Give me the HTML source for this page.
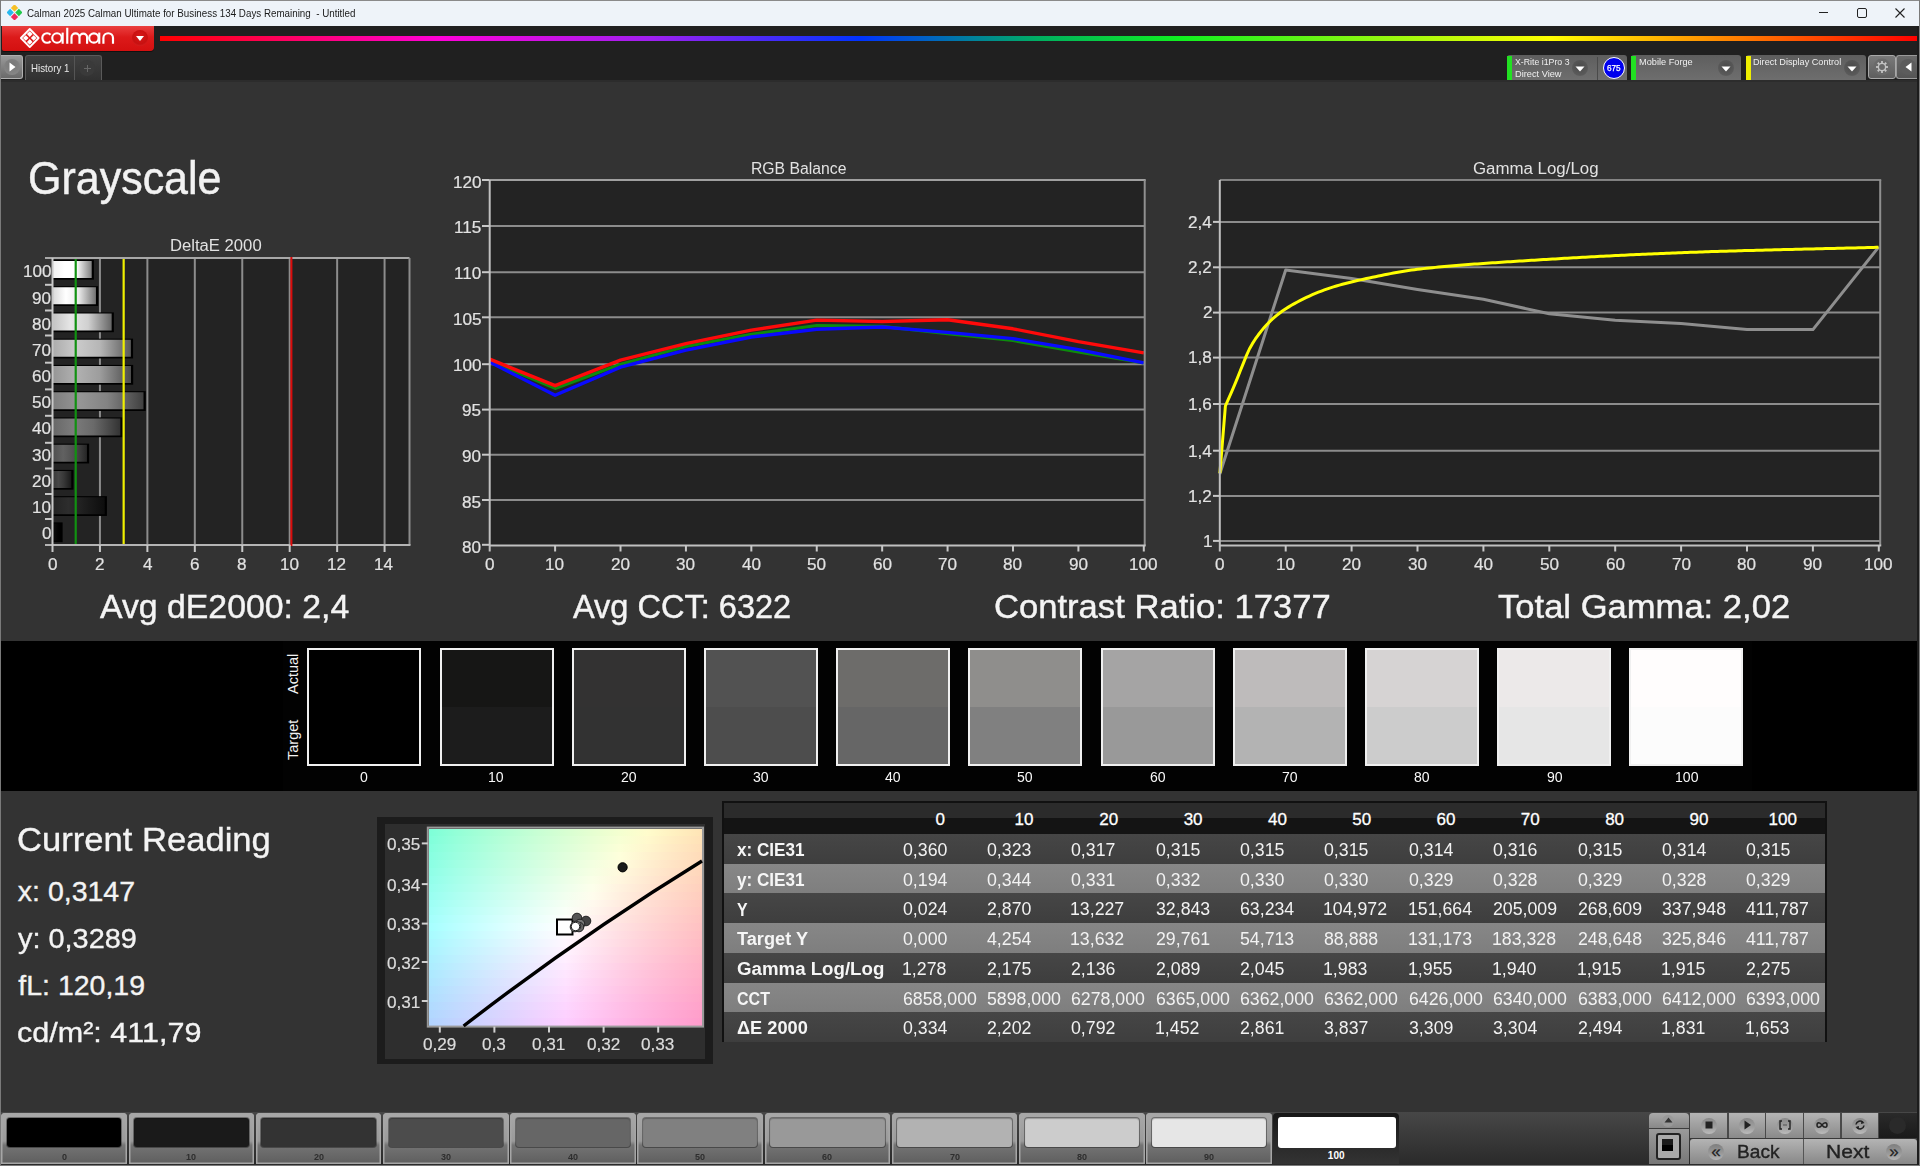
<!DOCTYPE html>
<html><head><meta charset="utf-8"><title>Calman</title>
<style>
html,body{margin:0;padding:0;width:1920px;height:1166px;overflow:hidden;background:#333}
body{position:relative;font-family:"Liberation Sans", sans-serif}
div,svg{box-sizing:content-box}
</style></head><body>
<div style="position:absolute;left:0;top:0;width:1920px;height:1166px;background:#333333"></div>
<div style="position:absolute;left:0;top:0;width:1920px;height:26px;background:#eef3f9;border-top:1px solid #8a8a8a;box-sizing:border-box"></div>
<div style="position:absolute;left:0;top:0;width:1px;height:1166px;background:#7a7a7a;z-index:5"></div>
<div style="position:absolute;left:1917px;top:26px;width:3px;height:1140px;background:#1c1c1c;z-index:5"></div>
<div style="position:absolute;left:1919px;top:0;width:1px;height:1166px;background:#7a7a7a;z-index:6"></div>
<div style="position:absolute;left:0;top:1165px;width:1920px;height:1px;background:#7a7a7a;z-index:6"></div>
<div style="position:absolute;left:1px;top:26px;width:1918px;height:54px;background:#202020"></div>
<svg style="position:absolute;left:7px;top:5px" width="15" height="15" viewBox="0 0 15 15">
<rect x="4.9" y="0.3" width="5.2" height="5.2" fill="#f6c026" transform="rotate(45 7.5 2.9)"/>
<rect x="9.3" y="4.9" width="5.2" height="5.2" fill="#22c94a" transform="rotate(45 11.9 7.5)"/>
<rect x="4.9" y="9.3" width="5.2" height="5.2" fill="#ee2a5e" transform="rotate(45 7.5 11.9)"/>
<rect x="0.5" y="4.9" width="5.2" height="5.2" fill="#27b8ef" transform="rotate(45 3.1 7.5)"/>
</svg>
<div style="position:absolute;left:1819px;top:12px;width:9px;height:1px;background:#222"></div>
<div style="position:absolute;left:1857px;top:8px;width:8px;height:8px;border:1px solid #222;border-radius:2px"></div>
<svg style="position:absolute;left:1895px;top:8px" width="10" height="10" viewBox="0 0 10 10"><path d="M0.5 0.5L9.5 9.5M9.5 0.5L0.5 9.5" stroke="#222" stroke-width="1.1"/></svg>
<div style="position:absolute;left:2px;top:26px;width:152px;height:25px;background:linear-gradient(#ea4040,#dc1a1a 45%,#d41010);border-radius:0 0 4px 2px;box-shadow:0 1px 0 #111"></div>
<svg style="position:absolute;left:0;top:26px" width="160" height="26" viewBox="0 26 160 26">
<g fill="none" stroke="#fff" stroke-width="1.9" stroke-linejoin="round">
<path d="M29.75 29 L38.6 38 L29.75 47.1 L20.9 38 Z"/>
</g>
<g fill="#fff">
<path d="M29.75 31.2 L32.6 34.05 L29.75 36.9 L26.9 34.05 Z"/>
<path d="M25.8 35.15 L28.65 38 L25.8 40.85 L22.95 38 Z"/>
<path d="M33.7 35.15 L36.55 38 L33.7 40.85 L30.85 38 Z"/>
<path d="M29.75 39.1 L32.6 41.95 L29.75 44.8 L26.9 41.95 Z"/>
</g>
<g fill="none" stroke="#fff" stroke-width="2.15">
<path d="M50.53 34.82 A4.75 4.75 0 1 0 50.53 41.18"/>
<circle cx="57.0" cy="38.0" r="4.75"/><path d="M62.65 32.6 V43.75"/>
<path d="M67.25 27.75 V43.75"/>
<path d="M71.5 43.75 V37.4 A4 4 0 0 1 79.5 37.4 V43.75 M79.5 37.4 A3.8 3.8 0 0 1 87.1 37.4 V43.75"/>
<circle cx="93.9" cy="38.0" r="4.7"/><path d="M99.25 32.6 V43.75"/>
<path d="M103.4 43.75 V38.0 A4.8 4.8 0 0 1 113.0 38.0 V43.75"/>
</g></svg>
<div style="position:absolute;left:132px;top:30px;width:16px;height:16px;border-radius:50%;background:radial-gradient(circle at 50% 40%,#d81818,#c81010 60%,#e03030)"></div>
<svg style="position:absolute;left:135px;top:35px" width="10" height="7"><path d="M1 1H9L5 6Z" fill="#fff"/></svg>
<div style="position:absolute;left:160px;top:36.3px;width:1758px;height:4.3px;background:linear-gradient(90deg,#ff0000 0px,#ff00d8 280px,#a020f0 490px,#0033ff 700px,#00b060 880px,#10f020 1020px,#ffff00 1390px,#ff0000 1760px)"></div>
<div style="position:absolute;left:1px;top:55px;width:22px;height:24px;background:linear-gradient(#9a9a9a,#6a6a6a);border:1px solid #b0b0b0;border-left:none;border-radius:0 3px 3px 0;box-sizing:border-box"></div>
<div style="position:absolute;left:4px;top:59px;width:16px;height:16px;border-radius:50%;background:radial-gradient(circle at 50% 35%,#777,#8a8a8a)"></div>
<svg style="position:absolute;left:9px;top:62px" width="7" height="10"><path d="M0.5 0.5L6.5 5L0.5 9.5Z" fill="#fff"/></svg>
<div style="position:absolute;left:25px;top:55px;width:77px;height:26px;background:linear-gradient(#414141,#303030);border:1px solid #5a5a5a;border-bottom:none;border-radius:3px 3px 0 0;box-sizing:border-box"></div>
<div style="position:absolute;left:74px;top:56px;width:1px;height:25px;background:#555"></div>
<div style="position:absolute;left:79px;top:60px;width:16px;height:16px;border-radius:50%;background:#3a3a3a"></div>
<div style="position:absolute;left:84px;top:68px;width:7px;height:1px;background:#666"></div><div style="position:absolute;left:87px;top:65px;width:1px;height:7px;background:#666"></div>
<div style="position:absolute;left:1px;top:80px;width:1916px;height:2px;background:#2c2c2c"></div>
<div style="position:absolute;left:1507px;top:55px;width:120px;height:25px;background:linear-gradient(#5e5e5e,#6e6e6e);border-radius:3px 3px 0 0"></div>
<div style="position:absolute;left:1507px;top:56px;width:5px;height:24px;background:#22e022"></div>
<div style="position:absolute;left:1572px;top:60px;width:16px;height:16px;border-radius:50%;background:radial-gradient(circle at 50% 40%,#4a4a4a,#5a5a5a 70%,#6a6a6a)"></div>
<svg style="position:absolute;left:1575px;top:66px" width="10" height="6"><path d="M0.5 0.5H9.5L5 5.5Z" fill="#fff"/></svg>
<div style="position:absolute;left:1597px;top:57px;width:1px;height:23px;background:#4a4a4a"></div>
<div style="position:absolute;left:1603px;top:56.5px;width:22px;height:22px;border-radius:50%;background:#0000ee;border:1px solid #fff;box-sizing:border-box"></div>
<div style="position:absolute;left:1631px;top:55px;width:110px;height:25px;background:linear-gradient(#5e5e5e,#6e6e6e);border-radius:3px 3px 0 0"></div>
<div style="position:absolute;left:1631px;top:56px;width:5px;height:24px;background:#22e022"></div>
<div style="position:absolute;left:1718px;top:60px;width:16px;height:16px;border-radius:50%;background:radial-gradient(circle at 50% 40%,#4a4a4a,#5a5a5a 70%,#6a6a6a)"></div>
<svg style="position:absolute;left:1721px;top:66px" width="10" height="6"><path d="M0.5 0.5H9.5L5 5.5Z" fill="#fff"/></svg>
<div style="position:absolute;left:1746px;top:55px;width:120px;height:25px;background:linear-gradient(#5e5e5e,#6e6e6e);border-radius:3px 3px 0 0"></div>
<div style="position:absolute;left:1746px;top:56px;width:5px;height:24px;background:#eeee00"></div>
<div style="position:absolute;left:1844px;top:60px;width:16px;height:16px;border-radius:50%;background:radial-gradient(circle at 50% 40%,#4a4a4a,#5a5a5a 70%,#6a6a6a)"></div>
<svg style="position:absolute;left:1847px;top:66px" width="10" height="6"><path d="M0.5 0.5H9.5L5 5.5Z" fill="#fff"/></svg>
<div style="position:absolute;left:1868px;top:55px;width:28px;height:24px;background:linear-gradient(#7a7a7a,#5e5e5e);border:1px solid #a8a8a8;border-radius:3px;box-sizing:border-box"></div>
<svg style="position:absolute;left:1873px;top:58px" width="18" height="18" viewBox="0 0 18 18"><circle cx="9" cy="9" r="8.5" fill="#6a6a6a"/>
<g fill="none" stroke="#c4c4c4" stroke-width="1.3"><circle cx="9" cy="9" r="3.6"/></g><g fill="#c4c4c4"><rect x="8.1" y="3.0" width="1.8" height="2.2" transform="rotate(0 9 9)"/><rect x="8.1" y="3.0" width="1.8" height="2.2" transform="rotate(45 9 9)"/><rect x="8.1" y="3.0" width="1.8" height="2.2" transform="rotate(90 9 9)"/><rect x="8.1" y="3.0" width="1.8" height="2.2" transform="rotate(135 9 9)"/><rect x="8.1" y="3.0" width="1.8" height="2.2" transform="rotate(180 9 9)"/><rect x="8.1" y="3.0" width="1.8" height="2.2" transform="rotate(225 9 9)"/><rect x="8.1" y="3.0" width="1.8" height="2.2" transform="rotate(270 9 9)"/><rect x="8.1" y="3.0" width="1.8" height="2.2" transform="rotate(315 9 9)"/></g><circle cx="9" cy="9" r="1.9" fill="#6a6a6a"/></svg>
<div style="position:absolute;left:1896px;top:55px;width:23px;height:24px;background:linear-gradient(#6a6a6a,#555);border:1px solid #9a9a9a;border-right:none;border-radius:3px 0 0 3px;box-sizing:border-box"></div>
<div style="position:absolute;left:1900px;top:59px;width:16px;height:16px;border-radius:50%;background:#5c5c5c"></div>
<svg style="position:absolute;left:1905px;top:62px" width="7" height="10"><path d="M6.5 0.5L0.5 5L6.5 9.5Z" fill="#fff"/></svg>
<svg style="position:absolute;left:0;top:0" width="440" height="600" viewBox="0 0 440 600"><defs><linearGradient id="bg0" x1="0" x2="1" y1="0" y2="0"><stop offset="0" stop-color="rgb(10,10,10)"/><stop offset="0.3" stop-color="rgb(10,10,10)"/><stop offset="0.6" stop-color="rgb(4,4,4)"/><stop offset="1" stop-color="rgb(0,0,0)"/></linearGradient><linearGradient id="bg1" x1="0" x2="1" y1="0" y2="0"><stop offset="0" stop-color="rgb(35,35,35)"/><stop offset="0.3" stop-color="rgb(45,45,45)"/><stop offset="0.6" stop-color="rgb(30,30,30)"/><stop offset="1" stop-color="rgb(13,13,13)"/></linearGradient><linearGradient id="bg2" x1="0" x2="1" y1="0" y2="0"><stop offset="0" stop-color="rgb(58,58,58)"/><stop offset="0.3" stop-color="rgb(71,71,71)"/><stop offset="0.6" stop-color="rgb(55,55,55)"/><stop offset="1" stop-color="rgb(26,26,26)"/></linearGradient><linearGradient id="bg3" x1="0" x2="1" y1="0" y2="0"><stop offset="0" stop-color="rgb(80,80,80)"/><stop offset="0.3" stop-color="rgb(97,97,97)"/><stop offset="0.6" stop-color="rgb(80,80,80)"/><stop offset="1" stop-color="rgb(38,38,38)"/></linearGradient><linearGradient id="bg4" x1="0" x2="1" y1="0" y2="0"><stop offset="0" stop-color="rgb(104,104,104)"/><stop offset="0.3" stop-color="rgb(124,124,124)"/><stop offset="0.6" stop-color="rgb(106,106,106)"/><stop offset="1" stop-color="rgb(51,51,51)"/></linearGradient><linearGradient id="bg5" x1="0" x2="1" y1="0" y2="0"><stop offset="0" stop-color="rgb(126,126,126)"/><stop offset="0.3" stop-color="rgb(150,150,150)"/><stop offset="0.6" stop-color="rgb(131,131,131)"/><stop offset="1" stop-color="rgb(64,64,64)"/></linearGradient><linearGradient id="bg6" x1="0" x2="1" y1="0" y2="0"><stop offset="0" stop-color="rgb(150,150,150)"/><stop offset="0.3" stop-color="rgb(177,177,177)"/><stop offset="0.6" stop-color="rgb(157,157,157)"/><stop offset="1" stop-color="rgb(76,76,76)"/></linearGradient><linearGradient id="bg7" x1="0" x2="1" y1="0" y2="0"><stop offset="0" stop-color="rgb(172,172,172)"/><stop offset="0.3" stop-color="rgb(203,203,203)"/><stop offset="0.6" stop-color="rgb(182,182,182)"/><stop offset="1" stop-color="rgb(89,89,89)"/></linearGradient><linearGradient id="bg8" x1="0" x2="1" y1="0" y2="0"><stop offset="0" stop-color="rgb(196,196,196)"/><stop offset="0.3" stop-color="rgb(230,230,230)"/><stop offset="0.6" stop-color="rgb(208,208,208)"/><stop offset="1" stop-color="rgb(102,102,102)"/></linearGradient><linearGradient id="bg9" x1="0" x2="1" y1="0" y2="0"><stop offset="0" stop-color="rgb(218,218,218)"/><stop offset="0.3" stop-color="rgb(255,255,255)"/><stop offset="0.6" stop-color="rgb(233,233,233)"/><stop offset="1" stop-color="rgb(114,114,114)"/></linearGradient><linearGradient id="bg10" x1="0" x2="1" y1="0" y2="0"><stop offset="0" stop-color="rgb(242,242,242)"/><stop offset="0.3" stop-color="rgb(255,255,255)"/><stop offset="0.6" stop-color="rgb(255,255,255)"/><stop offset="1" stop-color="rgb(128,128,128)"/></linearGradient></defs><rect x="52.5" y="258.0" width="357.0" height="287.0" fill="#232323"/><line x1="99.94" y1="258.0" x2="99.94" y2="545.0" stroke="#8c8c8c" stroke-width="2"/><line x1="147.38" y1="258.0" x2="147.38" y2="545.0" stroke="#8c8c8c" stroke-width="2"/><line x1="194.82" y1="258.0" x2="194.82" y2="545.0" stroke="#8c8c8c" stroke-width="2"/><line x1="242.26" y1="258.0" x2="242.26" y2="545.0" stroke="#8c8c8c" stroke-width="2"/><line x1="289.7" y1="258.0" x2="289.7" y2="545.0" stroke="#8c8c8c" stroke-width="2"/><line x1="337.14" y1="258.0" x2="337.14" y2="545.0" stroke="#8c8c8c" stroke-width="2"/><line x1="384.58" y1="258.0" x2="384.58" y2="545.0" stroke="#8c8c8c" stroke-width="2"/><rect x="52.5" y="522.40" width="10.12" height="19.8" fill="#000"/><rect x="53.0" y="523.50" width="7.42" height="17" fill="url(#bg0)"/><rect x="52.5" y="496.15" width="54.43" height="19.8" fill="#000"/><rect x="53.0" y="497.25" width="51.73" height="17" fill="url(#bg1)"/><rect x="52.5" y="469.90" width="20.99" height="19.8" fill="#000"/><rect x="53.0" y="471.00" width="18.29" height="17" fill="url(#bg2)"/><rect x="52.5" y="443.65" width="36.64" height="19.8" fill="#000"/><rect x="53.0" y="444.75" width="33.94" height="17" fill="url(#bg3)"/><rect x="52.5" y="417.40" width="70.06" height="19.8" fill="#000"/><rect x="53.0" y="418.50" width="67.36" height="17" fill="url(#bg4)"/><rect x="52.5" y="391.15" width="93.21" height="19.8" fill="#000"/><rect x="53.0" y="392.25" width="90.51" height="17" fill="url(#bg5)"/><rect x="52.5" y="364.90" width="80.69" height="19.8" fill="#000"/><rect x="53.0" y="366.00" width="77.99" height="17" fill="url(#bg6)"/><rect x="52.5" y="338.65" width="80.57" height="19.8" fill="#000"/><rect x="53.0" y="339.75" width="77.87" height="17" fill="url(#bg7)"/><rect x="52.5" y="312.40" width="61.36" height="19.8" fill="#000"/><rect x="53.0" y="313.50" width="58.66" height="17" fill="url(#bg8)"/><rect x="52.5" y="286.15" width="45.63" height="19.8" fill="#000"/><rect x="53.0" y="287.25" width="42.93" height="17" fill="url(#bg9)"/><rect x="52.5" y="259.90" width="41.41" height="19.8" fill="#000"/><rect x="53.0" y="261.00" width="38.71" height="17" fill="url(#bg10)"/><line x1="75.72" y1="258.0" x2="75.72" y2="545.0" stroke="#119111" stroke-width="2.2"/><line x1="123.66" y1="258.0" x2="123.66" y2="545.0" stroke="#f0f000" stroke-width="2.2"/><line x1="45" y1="258.0" x2="409.5" y2="258.0" stroke="#a8a8a8" stroke-width="2"/><line x1="409.5" y1="258.0" x2="409.5" y2="545.0" stroke="#8c8c8c" stroke-width="2"/><line x1="45" y1="545.0" x2="410.5" y2="545.0" stroke="#b4b4b4" stroke-width="2"/><line x1="52.5" y1="258.0" x2="52.5" y2="552.0" stroke="#c8c8c8" stroke-width="2"/><line x1="291.4" y1="257.0" x2="291.4" y2="546.0" stroke="#dc0a0a" stroke-width="2"/><line x1="45" y1="519.00" x2="52.5" y2="519.00" stroke="#c8c8c8" stroke-width="2"/><line x1="45" y1="494.00" x2="52.5" y2="494.00" stroke="#c8c8c8" stroke-width="2"/><line x1="45" y1="468.50" x2="52.5" y2="468.50" stroke="#c8c8c8" stroke-width="2"/><line x1="45" y1="442.80" x2="52.5" y2="442.80" stroke="#c8c8c8" stroke-width="2"/><line x1="45" y1="415.80" x2="52.5" y2="415.80" stroke="#c8c8c8" stroke-width="2"/><line x1="45" y1="389.40" x2="52.5" y2="389.40" stroke="#c8c8c8" stroke-width="2"/><line x1="45" y1="362.70" x2="52.5" y2="362.70" stroke="#c8c8c8" stroke-width="2"/><line x1="45" y1="335.50" x2="52.5" y2="335.50" stroke="#c8c8c8" stroke-width="2"/><line x1="45" y1="310.50" x2="52.5" y2="310.50" stroke="#c8c8c8" stroke-width="2"/><line x1="45" y1="284.80" x2="52.5" y2="284.80" stroke="#c8c8c8" stroke-width="2"/><line x1="99.94" y1="545.0" x2="99.94" y2="552.0" stroke="#c8c8c8" stroke-width="2"/><line x1="147.38" y1="545.0" x2="147.38" y2="552.0" stroke="#c8c8c8" stroke-width="2"/><line x1="194.82" y1="545.0" x2="194.82" y2="552.0" stroke="#c8c8c8" stroke-width="2"/><line x1="242.26" y1="545.0" x2="242.26" y2="552.0" stroke="#c8c8c8" stroke-width="2"/><line x1="289.7" y1="545.0" x2="289.7" y2="552.0" stroke="#c8c8c8" stroke-width="2"/><line x1="337.14" y1="545.0" x2="337.14" y2="552.0" stroke="#c8c8c8" stroke-width="2"/><line x1="384.58" y1="545.0" x2="384.58" y2="552.0" stroke="#c8c8c8" stroke-width="2"/></svg>
<svg style="position:absolute;left:0;top:0" width="1920" height="600" viewBox="0 0 1920 600"><rect x="489.7" y="180.0" width="655.0" height="365.5" fill="#232323"/><line x1="489.7" y1="500.00" x2="1144.7" y2="500.00" stroke="#8c8c8c" stroke-width="2"/><line x1="489.7" y1="454.70" x2="1144.7" y2="454.70" stroke="#8c8c8c" stroke-width="2"/><line x1="489.7" y1="409.60" x2="1144.7" y2="409.60" stroke="#8c8c8c" stroke-width="2"/><line x1="489.7" y1="364.20" x2="1144.7" y2="364.20" stroke="#8c8c8c" stroke-width="2"/><line x1="489.7" y1="317.30" x2="1144.7" y2="317.30" stroke="#8c8c8c" stroke-width="2"/><line x1="489.7" y1="272.20" x2="1144.7" y2="272.20" stroke="#8c8c8c" stroke-width="2"/><line x1="489.7" y1="226.00" x2="1144.7" y2="226.00" stroke="#8c8c8c" stroke-width="2"/><polyline points="489.70,360.80 555.11,388.40 620.52,364.20 685.93,346.50 751.34,334.30 816.75,325.50 882.16,326.40 947.57,333.70 1012.98,340.50 1078.39,352.00 1143.80,363.00" fill="none" stroke="#0d8a0d" stroke-width="3.2" stroke-linejoin="round"/><polyline points="489.70,362.00 555.11,395.20 620.52,367.10 685.93,350.10 751.34,337.00 816.75,329.20 882.16,327.00 947.57,332.40 1012.98,338.60 1078.39,349.60 1143.80,362.90" fill="none" stroke="#0a0aff" stroke-width="3.4" stroke-linejoin="round"/><polyline points="489.70,359.20 555.11,385.70 620.52,360.20 685.93,343.70 751.34,330.10 816.75,320.10 882.16,321.50 947.57,319.70 1012.98,328.80 1078.39,341.60 1143.80,352.90" fill="none" stroke="#ff0a0a" stroke-width="3.4" stroke-linejoin="round"/><line x1="489.7" y1="180.0" x2="1145.7" y2="180.0" stroke="#a0a0a0" stroke-width="2"/><line x1="1144.7" y1="180.0" x2="1144.7" y2="545.5" stroke="#909090" stroke-width="2"/><line x1="489.7" y1="545.5" x2="1145.7" y2="545.5" stroke="#c0c0c0" stroke-width="2"/><line x1="489.7" y1="180.0" x2="489.7" y2="551.5" stroke="#c0c0c0" stroke-width="2"/><line x1="482" y1="544.80" x2="489.7" y2="544.80" stroke="#c8c8c8" stroke-width="2"/><line x1="482" y1="500.00" x2="489.7" y2="500.00" stroke="#c8c8c8" stroke-width="2"/><line x1="482" y1="454.70" x2="489.7" y2="454.70" stroke="#c8c8c8" stroke-width="2"/><line x1="482" y1="409.60" x2="489.7" y2="409.60" stroke="#c8c8c8" stroke-width="2"/><line x1="482" y1="364.20" x2="489.7" y2="364.20" stroke="#c8c8c8" stroke-width="2"/><line x1="482" y1="317.30" x2="489.7" y2="317.30" stroke="#c8c8c8" stroke-width="2"/><line x1="482" y1="272.20" x2="489.7" y2="272.20" stroke="#c8c8c8" stroke-width="2"/><line x1="482" y1="226.00" x2="489.7" y2="226.00" stroke="#c8c8c8" stroke-width="2"/><line x1="482" y1="180.00" x2="489.7" y2="180.00" stroke="#c8c8c8" stroke-width="2"/><line x1="555.11" y1="545.5" x2="555.11" y2="551.5" stroke="#c8c8c8" stroke-width="2"/><line x1="620.52" y1="545.5" x2="620.52" y2="551.5" stroke="#c8c8c8" stroke-width="2"/><line x1="685.93" y1="545.5" x2="685.93" y2="551.5" stroke="#c8c8c8" stroke-width="2"/><line x1="751.34" y1="545.5" x2="751.34" y2="551.5" stroke="#c8c8c8" stroke-width="2"/><line x1="816.75" y1="545.5" x2="816.75" y2="551.5" stroke="#c8c8c8" stroke-width="2"/><line x1="882.16" y1="545.5" x2="882.16" y2="551.5" stroke="#c8c8c8" stroke-width="2"/><line x1="947.57" y1="545.5" x2="947.57" y2="551.5" stroke="#c8c8c8" stroke-width="2"/><line x1="1012.98" y1="545.5" x2="1012.98" y2="551.5" stroke="#c8c8c8" stroke-width="2"/><line x1="1078.39" y1="545.5" x2="1078.39" y2="551.5" stroke="#c8c8c8" stroke-width="2"/><line x1="1143.80" y1="545.5" x2="1143.80" y2="551.5" stroke="#c8c8c8" stroke-width="2"/><rect x="1219.8" y="180.0" width="660.4000000000001" height="365.5" fill="#232323"/><line x1="1219.8" y1="540.90" x2="1880.2" y2="540.90" stroke="#8c8c8c" stroke-width="2"/><line x1="1219.8" y1="495.90" x2="1880.2" y2="495.90" stroke="#8c8c8c" stroke-width="2"/><line x1="1219.8" y1="450.70" x2="1880.2" y2="450.70" stroke="#8c8c8c" stroke-width="2"/><line x1="1219.8" y1="404.00" x2="1880.2" y2="404.00" stroke="#8c8c8c" stroke-width="2"/><line x1="1219.8" y1="357.60" x2="1880.2" y2="357.60" stroke="#8c8c8c" stroke-width="2"/><line x1="1219.8" y1="312.60" x2="1880.2" y2="312.60" stroke="#8c8c8c" stroke-width="2"/><line x1="1219.8" y1="267.30" x2="1880.2" y2="267.30" stroke="#8c8c8c" stroke-width="2"/><line x1="1219.8" y1="221.90" x2="1880.2" y2="221.90" stroke="#8c8c8c" stroke-width="2"/><polyline points="1219.80,474.00 1285.70,270.00 1351.60,278.60 1417.50,289.40 1483.40,299.20 1549.30,313.80 1615.20,320.30 1681.10,323.40 1747.00,329.60 1812.90,329.60 1878.80,246.90" fill="none" stroke="#8e8e8e" stroke-width="3" stroke-linejoin="round"/><polyline points="1219.9,473.1 1225.40,406.00 1228.40,399.16 1231.40,392.34 1234.40,385.39 1237.40,378.14 1240.40,370.56 1243.40,363.08 1246.40,355.67 1249.40,348.99 1252.40,343.68 1255.40,338.99 1258.40,334.77 1261.40,330.87 1264.40,327.26 1267.40,323.95 1270.40,320.95 1273.40,318.21 1276.40,315.65 1279.40,313.27 1282.40,311.07 1285.40,309.04 1288.40,307.14 1291.40,305.32 1294.40,303.59 1297.40,301.94 1300.40,300.36 1303.40,298.85 1306.40,297.41 1309.40,296.03 1312.40,294.71 1315.40,293.44 1318.40,292.21 1321.40,291.03 1324.40,289.91 1327.40,288.84 1330.40,287.83 1333.40,286.87 1336.40,285.98 1339.40,285.12 1342.40,284.29 1345.40,283.50 1348.40,282.73 1351.40,281.99 1354.40,281.27 1357.40,280.57 1360.40,279.89 1363.40,279.23 1366.40,278.58 1369.40,277.94 1372.40,277.32 1375.40,276.69 1378.40,276.07 1381.40,275.45 1384.40,274.83 1387.40,274.23 1390.40,273.63 1393.40,273.06 1396.40,272.50 1399.40,271.96 1402.40,271.44 1405.40,270.95 1408.40,270.49 1411.40,270.06 1414.40,269.67 1417.40,269.31 1420.40,268.97 1423.40,268.63 1426.40,268.30 1429.40,267.98 1432.40,267.68 1435.40,267.38 1438.40,267.08 1441.40,266.80 1444.40,266.52 1447.40,266.25 1450.40,265.99 1453.40,265.74 1456.40,265.49 1459.40,265.24 1462.40,265.00 1465.40,264.77 1468.40,264.54 1471.40,264.32 1474.40,264.10 1477.40,263.88 1480.40,263.67 1483.40,263.46 1486.40,263.26 1489.40,263.05 1492.40,262.85 1495.40,262.65 1498.40,262.46 1501.40,262.26 1504.40,262.06 1507.40,261.87 1510.40,261.67 1513.40,261.48 1516.40,261.29 1519.40,261.10 1522.40,260.90 1525.40,260.71 1528.40,260.53 1531.40,260.34 1534.40,260.15 1537.40,259.97 1540.40,259.78 1543.40,259.60 1546.40,259.42 1549.40,259.24 1552.40,259.06 1555.40,258.88 1558.40,258.71 1561.40,258.53 1564.40,258.36 1567.40,258.18 1570.40,258.01 1573.40,257.84 1576.40,257.67 1579.40,257.51 1582.40,257.34 1585.40,257.17 1588.40,257.01 1591.40,256.85 1594.40,256.69 1597.40,256.53 1600.40,256.37 1603.40,256.21 1606.40,256.06 1609.40,255.91 1612.40,255.75 1615.40,255.60 1618.40,255.45 1621.40,255.31 1624.40,255.16 1627.40,255.01 1630.40,254.87 1633.40,254.73 1636.40,254.59 1639.40,254.45 1642.40,254.31 1645.40,254.18 1648.40,254.04 1651.40,253.91 1654.40,253.78 1657.40,253.65 1660.40,253.52 1663.40,253.40 1666.40,253.27 1669.40,253.15 1672.40,253.03 1675.40,252.91 1678.40,252.79 1681.40,252.68 1684.40,252.56 1687.40,252.45 1690.40,252.34 1693.40,252.23 1696.40,252.13 1699.40,252.02 1702.40,251.92 1705.40,251.82 1708.40,251.72 1711.40,251.62 1714.40,251.52 1717.40,251.42 1720.40,251.33 1723.40,251.24 1726.40,251.15 1729.40,251.06 1732.40,250.97 1735.40,250.88 1738.40,250.79 1741.40,250.71 1744.40,250.62 1747.40,250.54 1750.40,250.46 1753.40,250.38 1756.40,250.30 1759.40,250.22 1762.40,250.14 1765.40,250.06 1768.40,249.98 1771.40,249.91 1774.40,249.83 1777.40,249.76 1780.40,249.68 1783.40,249.61 1786.40,249.53 1789.40,249.46 1792.40,249.39 1795.40,249.32 1798.40,249.24 1801.40,249.17 1804.40,249.10 1807.40,249.03 1810.40,248.96 1813.40,248.89 1816.40,248.82 1819.40,248.75 1822.40,248.68 1825.40,248.61 1828.40,248.54 1831.40,248.46 1834.40,248.39 1837.40,248.32 1840.40,248.25 1843.40,248.18 1846.40,248.11 1849.40,248.03 1852.40,247.96 1855.40,247.89 1858.40,247.81 1861.40,247.74 1864.40,247.66 1867.40,247.59 1870.40,247.51 1873.40,247.43 1876.40,247.36 1878.50,247.30" fill="none" stroke="#ffff00" stroke-width="3" stroke-linejoin="round"/><line x1="1219.8" y1="180.0" x2="1881.2" y2="180.0" stroke="#a0a0a0" stroke-width="1.5"/><line x1="1880.2" y1="180.0" x2="1880.2" y2="545.5" stroke="#909090" stroke-width="2"/><line x1="1219.8" y1="545.5" x2="1881.2" y2="545.5" stroke="#c0c0c0" stroke-width="2"/><line x1="1219.8" y1="180.0" x2="1219.8" y2="551.5" stroke="#c0c0c0" stroke-width="2"/><line x1="1213" y1="540.90" x2="1219.8" y2="540.90" stroke="#c8c8c8" stroke-width="2"/><line x1="1213" y1="495.90" x2="1219.8" y2="495.90" stroke="#c8c8c8" stroke-width="2"/><line x1="1213" y1="450.70" x2="1219.8" y2="450.70" stroke="#c8c8c8" stroke-width="2"/><line x1="1213" y1="404.00" x2="1219.8" y2="404.00" stroke="#c8c8c8" stroke-width="2"/><line x1="1213" y1="357.60" x2="1219.8" y2="357.60" stroke="#c8c8c8" stroke-width="2"/><line x1="1213" y1="312.60" x2="1219.8" y2="312.60" stroke="#c8c8c8" stroke-width="2"/><line x1="1213" y1="267.30" x2="1219.8" y2="267.30" stroke="#c8c8c8" stroke-width="2"/><line x1="1213" y1="221.90" x2="1219.8" y2="221.90" stroke="#c8c8c8" stroke-width="2"/><line x1="1285.70" y1="545.5" x2="1285.70" y2="551.5" stroke="#c8c8c8" stroke-width="2"/><line x1="1351.60" y1="545.5" x2="1351.60" y2="551.5" stroke="#c8c8c8" stroke-width="2"/><line x1="1417.50" y1="545.5" x2="1417.50" y2="551.5" stroke="#c8c8c8" stroke-width="2"/><line x1="1483.40" y1="545.5" x2="1483.40" y2="551.5" stroke="#c8c8c8" stroke-width="2"/><line x1="1549.30" y1="545.5" x2="1549.30" y2="551.5" stroke="#c8c8c8" stroke-width="2"/><line x1="1615.20" y1="545.5" x2="1615.20" y2="551.5" stroke="#c8c8c8" stroke-width="2"/><line x1="1681.10" y1="545.5" x2="1681.10" y2="551.5" stroke="#c8c8c8" stroke-width="2"/><line x1="1747.00" y1="545.5" x2="1747.00" y2="551.5" stroke="#c8c8c8" stroke-width="2"/><line x1="1812.90" y1="545.5" x2="1812.90" y2="551.5" stroke="#c8c8c8" stroke-width="2"/><line x1="1878.80" y1="545.5" x2="1878.80" y2="551.5" stroke="#c8c8c8" stroke-width="2"/></svg>
<div style="position:absolute;left:1px;top:641px;width:1916px;height:150px;background:#000"></div>
<div style="position:absolute;left:283px;top:641px;width:1469px;height:150px;background:#020202"></div>
<div style="position:absolute;left:307.3px;top:647.5px;width:110px;height:114px;border:2px solid #f0f0f0;background:linear-gradient(#000000 50%,#000000 50%)"></div>
<div style="position:absolute;left:439.5px;top:647.5px;width:110px;height:114px;border:2px solid #f0f0f0;background:linear-gradient(#161615 50%,#1c1c1c 50%)"></div>
<div style="position:absolute;left:571.7px;top:647.5px;width:110px;height:114px;border:2px solid #f0f0f0;background:linear-gradient(#333232 50%,#323232 50%)"></div>
<div style="position:absolute;left:703.9px;top:647.5px;width:110px;height:114px;border:2px solid #f0f0f0;background:linear-gradient(#525252 50%,#4d4d4d 50%)"></div>
<div style="position:absolute;left:836.1px;top:647.5px;width:110px;height:114px;border:2px solid #f0f0f0;background:linear-gradient(#6d6c6a 50%,#666666 50%)"></div>
<div style="position:absolute;left:968.3px;top:647.5px;width:110px;height:114px;border:2px solid #f0f0f0;background:linear-gradient(#8f8e8c 50%,#808080 50%)"></div>
<div style="position:absolute;left:1100.5px;top:647.5px;width:110px;height:114px;border:2px solid #f0f0f0;background:linear-gradient(#a5a4a4 50%,#999999 50%)"></div>
<div style="position:absolute;left:1232.7px;top:647.5px;width:110px;height:114px;border:2px solid #f0f0f0;background:linear-gradient(#bebbbb 50%,#b3b3b3 50%)"></div>
<div style="position:absolute;left:1364.9px;top:647.5px;width:110px;height:114px;border:2px solid #f0f0f0;background:linear-gradient(#d6d3d3 50%,#cccccc 50%)"></div>
<div style="position:absolute;left:1497.1px;top:647.5px;width:110px;height:114px;border:2px solid #f0f0f0;background:linear-gradient(#ece9e9 50%,#e6e6e6 50%)"></div>
<div style="position:absolute;left:1629.3px;top:647.5px;width:110px;height:114px;border:2px solid #f0f0f0;background:linear-gradient(#fffdfd 50%,#fcfcfc 50%)"></div>
<div style="position:absolute;left:286px;top:653px;width:40px;height:41px;"><div style="position:absolute;left:0;top:41px;width:41px;font-size:14.5px;line-height:14px;color:#f2f2f2;transform:rotate(-90deg);transform-origin:0 0;white-space:pre">Actual</div></div>
<div style="position:absolute;left:286px;top:719px;width:40px;height:41px;"><div style="position:absolute;left:0;top:41px;width:41px;font-size:14.5px;line-height:14px;color:#f2f2f2;transform:rotate(-90deg);transform-origin:0 0;white-space:pre">Target</div></div>
<div style="position:absolute;left:377px;top:817px;width:336px;height:247px;background:#1c1c1c"></div>
<div style="position:absolute;left:385px;top:824px;width:320px;height:235px;background:#2e2e2e"></div>
<div style="position:absolute;left:428.8px;top:828.6px;width:273.2px;height:197.0px;overflow:hidden;filter:blur(0px)"><div style="position:absolute;left:0;top:0.00px;width:273.2px;height:8.48px;background:linear-gradient(90deg,#7dffd8 0%,#93ffd7 10%,#a6ffd6 20%,#b7ffd5 30%,#c8ffd4 40%,#d7ffd2 50%,#e6ffd1 60%,#f4ffd0 70%,#fffccc 80%,#fff0c0 90%,#ffe4b6 100%)"></div><div style="position:absolute;left:0;top:7.88px;width:273.2px;height:8.48px;background:linear-gradient(90deg,#80ffdb 0%,#96ffda 10%,#a9ffd9 20%,#bbffd8 30%,#cbffd7 40%,#daffd6 50%,#e9ffd5 60%,#f7ffd4 70%,#fff9cd 80%,#ffecc1 90%,#ffe1b7 100%)"></div><div style="position:absolute;left:0;top:15.76px;width:273.2px;height:8.48px;background:linear-gradient(90deg,#84ffde 0%,#99ffdd 10%,#acffdc 20%,#beffdb 30%,#ceffda 40%,#ddffd9 50%,#ecffd8 60%,#fbffd7 70%,#fff6ce 80%,#ffe9c3 90%,#ffdeb8 100%)"></div><div style="position:absolute;left:0;top:23.64px;width:273.2px;height:8.48px;background:linear-gradient(90deg,#87ffe1 0%,#9cffe0 10%,#afffdf 20%,#c1ffdf 30%,#d1ffde 40%,#e1ffdd 50%,#efffdc 60%,#feffdb 70%,#fff2cf 80%,#ffe6c4 90%,#ffdbb9 100%)"></div><div style="position:absolute;left:0;top:31.52px;width:273.2px;height:8.48px;background:linear-gradient(90deg,#8affe4 0%,#a0ffe3 10%,#b2ffe3 20%,#c4ffe2 30%,#d4ffe1 40%,#e4ffe0 50%,#f3ffe0 60%,#fffddd 70%,#ffefd0 80%,#ffe3c4 90%,#ffd8ba 100%)"></div><div style="position:absolute;left:0;top:39.40px;width:273.2px;height:8.48px;background:linear-gradient(90deg,#8effe7 0%,#a3ffe7 10%,#b6ffe6 20%,#c7ffe5 30%,#d7ffe5 40%,#e7ffe4 50%,#f6ffe3 60%,#fff9dd 70%,#ffecd1 80%,#ffe0c5 90%,#ffd6bb 100%)"></div><div style="position:absolute;left:0;top:47.28px;width:273.2px;height:8.48px;background:linear-gradient(90deg,#91ffeb 0%,#a6ffea 10%,#b9ffea 20%,#caffe9 30%,#dbffe8 40%,#ebffe8 50%,#faffe7 60%,#fff6de 70%,#ffe9d2 80%,#ffddc6 90%,#ffd3bc 100%)"></div><div style="position:absolute;left:0;top:55.16px;width:273.2px;height:8.48px;background:linear-gradient(90deg,#95ffee 0%,#a9ffed 10%,#bcffed 20%,#ceffed 30%,#deffec 40%,#eeffec 50%,#fdffeb 60%,#fff2df 70%,#ffe6d2 80%,#ffdac7 90%,#ffd0bd 100%)"></div><div style="position:absolute;left:0;top:63.04px;width:273.2px;height:8.48px;background:linear-gradient(90deg,#98fff1 0%,#adfff1 10%,#c0fff1 20%,#d1fff0 30%,#e2fff0 40%,#f2ffef 50%,#fffded 60%,#ffefdf 70%,#ffe2d3 80%,#ffd7c8 90%,#ffcdbe 100%)"></div><div style="position:absolute;left:0;top:70.92px;width:273.2px;height:8.48px;background:linear-gradient(90deg,#9cfff5 0%,#b0fff4 10%,#c3fff4 20%,#d4fff4 30%,#e5fff4 40%,#f5fff3 50%,#fff9ee 60%,#ffece0 70%,#ffdfd4 80%,#ffd4c9 90%,#ffcabf 100%)"></div><div style="position:absolute;left:0;top:78.80px;width:273.2px;height:8.48px;background:linear-gradient(90deg,#9ffff8 0%,#b4fff8 10%,#c6fff8 20%,#d8fff8 30%,#e9fff7 40%,#f9fff7 50%,#fff6ee 60%,#ffe8e1 70%,#ffdcd5 80%,#ffd1ca 90%,#ffc7c0 100%)"></div><div style="position:absolute;left:0;top:86.68px;width:273.2px;height:8.48px;background:linear-gradient(90deg,#a3fffc 0%,#b7fffc 10%,#cafffc 20%,#dcfffc 30%,#ecfffb 40%,#fdfffb 50%,#fff2ef 60%,#ffe5e1 70%,#ffd9d5 80%,#ffcecb 90%,#ffc4c1 100%)"></div><div style="position:absolute;left:0;top:94.56px;width:273.2px;height:8.48px;background:linear-gradient(90deg,#a6ffff 0%,#baffff 10%,#cdffff 20%,#dfffff 30%,#f0feff 40%,#fffefe 50%,#ffefef 60%,#ffe1e2 70%,#ffd6d6 80%,#ffcbcb 90%,#ffc1c2 100%)"></div><div style="position:absolute;left:0;top:102.44px;width:273.2px;height:8.48px;background:linear-gradient(90deg,#a7fbff 0%,#bbfbff 10%,#cefbff 20%,#dffbff 30%,#f0faff 40%,#fffafe 50%,#ffebf0 60%,#ffdee3 70%,#ffd2d7 80%,#ffc8cc 90%,#ffbec3 100%)"></div><div style="position:absolute;left:0;top:110.32px;width:273.2px;height:8.48px;background:linear-gradient(90deg,#a8f7ff 0%,#bcf7ff 10%,#cef7ff 20%,#dff7ff 30%,#eff6ff 40%,#fff6ff 50%,#ffe7f0 60%,#ffdbe3 70%,#ffcfd8 80%,#ffc5cd 90%,#ffbbc3 100%)"></div><div style="position:absolute;left:0;top:118.20px;width:273.2px;height:8.48px;background:linear-gradient(90deg,#a9f4ff 0%,#bdf4ff 10%,#cef3ff 20%,#dff3ff 30%,#eff2ff 40%,#fff2ff 50%,#ffe4f1 60%,#ffd7e4 70%,#ffccd8 80%,#ffc2ce 90%,#ffb8c4 100%)"></div><div style="position:absolute;left:0;top:126.08px;width:273.2px;height:8.48px;background:linear-gradient(90deg,#aaf0ff 0%,#bdf0ff 10%,#cfefff 20%,#dfefff 30%,#efeeff 40%,#ffeeff 50%,#ffe0f1 60%,#ffd4e4 70%,#ffc9d9 80%,#ffbecf 90%,#ffb5c5 100%)"></div><div style="position:absolute;left:0;top:133.96px;width:273.2px;height:8.48px;background:linear-gradient(90deg,#abedff 0%,#beecff 10%,#cfecff 20%,#e0ebff 30%,#efeaff 40%,#feeaff 50%,#ffddf1 60%,#ffd0e5 70%,#ffc5d9 80%,#ffbbcf 90%,#ffb2c6 100%)"></div><div style="position:absolute;left:0;top:141.84px;width:273.2px;height:8.48px;background:linear-gradient(90deg,#ace9ff 0%,#bfe9ff 10%,#d0e8ff 20%,#e0e7ff 30%,#efe7ff 40%,#fee6ff 50%,#ffd9f2 60%,#ffcde5 70%,#ffc2da 80%,#ffb8d0 90%,#ffafc7 100%)"></div><div style="position:absolute;left:0;top:149.72px;width:273.2px;height:8.48px;background:linear-gradient(90deg,#ade6ff 0%,#bfe5ff 10%,#d0e4ff 20%,#e0e3ff 30%,#efe3ff 40%,#fee2ff 50%,#ffd5f2 60%,#ffcae6 70%,#ffbfdb 80%,#ffb5d1 90%,#ffacc7 100%)"></div><div style="position:absolute;left:0;top:157.60px;width:273.2px;height:8.48px;background:linear-gradient(90deg,#aee2ff 0%,#c0e1ff 10%,#d0e1ff 20%,#e0e0ff 30%,#efdfff 40%,#fedeff 50%,#ffd2f3 60%,#ffc6e6 70%,#ffbcdb 80%,#ffb2d1 90%,#ffa9c8 100%)"></div><div style="position:absolute;left:0;top:165.48px;width:273.2px;height:8.48px;background:linear-gradient(90deg,#afdfff 0%,#c0deff 10%,#d1ddff 20%,#e0dcff 30%,#efdbff 40%,#fddaff 50%,#ffcef3 60%,#ffc3e7 70%,#ffb8dc 80%,#ffafd2 90%,#ffa6c9 100%)"></div><div style="position:absolute;left:0;top:173.36px;width:273.2px;height:8.48px;background:linear-gradient(90deg,#b0dbff 0%,#c1daff 10%,#d1d9ff 20%,#e0d8ff 30%,#efd7ff 40%,#fdd6ff 50%,#ffcbf3 60%,#ffbfe7 70%,#ffb5dd 80%,#ffabd3 90%,#ffa3ca 100%)"></div><div style="position:absolute;left:0;top:181.24px;width:273.2px;height:8.48px;background:linear-gradient(90deg,#b1d8ff 0%,#c1d7ff 10%,#d1d6ff 20%,#e0d4ff 30%,#efd3ff 40%,#fdd2ff 50%,#ffc7f4 60%,#ffbce8 70%,#ffb2dd 80%,#ffa8d3 90%,#ff9fca 100%)"></div><div style="position:absolute;left:0;top:189.12px;width:273.2px;height:8.48px;background:linear-gradient(90deg,#b1d4ff 0%,#c2d3ff 10%,#d2d2ff 20%,#e0d1ff 30%,#efcfff 40%,#fdceff 50%,#ffc3f4 60%,#ffb8e8 70%,#ffaede 80%,#ffa5d4 90%,#ff9ccb 100%)"></div></div>
<svg style="position:absolute;left:0;top:0" width="720" height="1070" viewBox="0 0 720 1070"><rect x="427.8" y="827.6" width="275.2" height="198.9999999999999" fill="none" stroke="#9a9a9a" stroke-width="2"/><path d="M463.6 1026 Q 580 936 702 861" fill="none" stroke="#000" stroke-width="3.4"/><circle cx="622.6" cy="867.3" r="4.6" fill="#1a1a1a" stroke="#000" stroke-width="1"/><rect x="557" y="919.5" width="15.5" height="15" fill="#fff" stroke="#000" stroke-width="2"/><circle cx="577" cy="918" r="4.8" fill="#555" stroke="#222" stroke-width="1"/><circle cx="586" cy="921" r="4.8" fill="#444" stroke="#222" stroke-width="1"/><circle cx="580" cy="924" r="4.8" fill="#777" stroke="#222" stroke-width="1"/><circle cx="575" cy="927" r="4.8" fill="#999" stroke="#222" stroke-width="1"/><circle cx="579" cy="927" r="4.8" fill="#666" stroke="#222" stroke-width="1"/><circle cx="576" cy="926" r="4.8" fill="#bbb" stroke="#222" stroke-width="1"/><circle cx="575.5" cy="926.5" r="4.2" fill="#fff" stroke="#222" stroke-width="1"/><line x1="439.80" y1="1026.6" x2="439.80" y2="1032.6" stroke="#d0d0d0" stroke-width="2"/><line x1="494.40" y1="1026.6" x2="494.40" y2="1032.6" stroke="#d0d0d0" stroke-width="2"/><line x1="549.00" y1="1026.6" x2="549.00" y2="1032.6" stroke="#d0d0d0" stroke-width="2"/><line x1="603.60" y1="1026.6" x2="603.60" y2="1032.6" stroke="#d0d0d0" stroke-width="2"/><line x1="658.20" y1="1026.6" x2="658.20" y2="1032.6" stroke="#d0d0d0" stroke-width="2"/><line x1="421.8" y1="1001.00" x2="427.8" y2="1001.00" stroke="#d0d0d0" stroke-width="2"/><line x1="421.8" y1="962.00" x2="427.8" y2="962.00" stroke="#d0d0d0" stroke-width="2"/><line x1="421.8" y1="923.60" x2="427.8" y2="923.60" stroke="#d0d0d0" stroke-width="2"/><line x1="421.8" y1="884.10" x2="427.8" y2="884.10" stroke="#d0d0d0" stroke-width="2"/><line x1="421.8" y1="843.40" x2="427.8" y2="843.40" stroke="#d0d0d0" stroke-width="2"/></svg>
<div style="position:absolute;left:722px;top:801px;width:1105px;height:241px;background:#111"></div>
<div style="position:absolute;left:724px;top:803px;width:1101px;height:15px;background:#2b2b2b"></div>
<div style="position:absolute;left:724px;top:818px;width:1101px;height:16px;background:#141414"></div>
<div style="position:absolute;left:724px;top:834.0px;width:1101px;height:30.0px;background:linear-gradient(#464646,#3e3e3e)"></div>
<div style="position:absolute;left:724px;top:863.7px;width:1101px;height:30.0px;background:linear-gradient(#878787,#7e7e7e)"></div>
<div style="position:absolute;left:724px;top:893.4px;width:1101px;height:30.0px;background:linear-gradient(#464646,#3e3e3e)"></div>
<div style="position:absolute;left:724px;top:923.1px;width:1101px;height:30.0px;background:linear-gradient(#878787,#7e7e7e)"></div>
<div style="position:absolute;left:724px;top:952.8px;width:1101px;height:30.0px;background:linear-gradient(#464646,#3e3e3e)"></div>
<div style="position:absolute;left:724px;top:982.5px;width:1101px;height:30.0px;background:linear-gradient(#878787,#7e7e7e)"></div>
<div style="position:absolute;left:724px;top:1012.2px;width:1101px;height:30.0px;background:linear-gradient(#464646,#3e3e3e)"></div>
<div style="position:absolute;left:1px;top:1112px;width:1916px;height:53px;background:linear-gradient(#474747,#2a2a2a)"></div>
<div style="position:absolute;left:1.4px;top:1113px;width:125.5px;height:51px;background:linear-gradient(#a8a8a8,#9a9a9a 55%,#747474 63%,#5e5e5e);border-radius:4px 4px 0 0;box-shadow:inset 0 0 0 1.5px #a6a6a6"></div>
<div style="position:absolute;left:6.9px;top:1117.5px;width:114.5px;height:29.5px;background:rgb(0,0,0);border-radius:3px;box-shadow:0 0 0 1px rgba(0,0,0,0.35),inset 0 1px 1px rgba(0,0,0,0.25)"></div>
<div style="position:absolute;left:128.6px;top:1113px;width:125.5px;height:51px;background:linear-gradient(#a8a8a8,#9a9a9a 55%,#747474 63%,#5e5e5e);border-radius:4px 4px 0 0;box-shadow:inset 0 0 0 1.5px #a6a6a6"></div>
<div style="position:absolute;left:134.1px;top:1117.5px;width:114.5px;height:29.5px;background:rgb(26,26,26);border-radius:3px;box-shadow:0 0 0 1px rgba(0,0,0,0.35),inset 0 1px 1px rgba(0,0,0,0.25)"></div>
<div style="position:absolute;left:255.8px;top:1113px;width:125.5px;height:51px;background:linear-gradient(#a8a8a8,#9a9a9a 55%,#747474 63%,#5e5e5e);border-radius:4px 4px 0 0;box-shadow:inset 0 0 0 1.5px #a6a6a6"></div>
<div style="position:absolute;left:261.3px;top:1117.5px;width:114.5px;height:29.5px;background:rgb(51,51,51);border-radius:3px;box-shadow:0 0 0 1px rgba(0,0,0,0.35),inset 0 1px 1px rgba(0,0,0,0.25)"></div>
<div style="position:absolute;left:383.0px;top:1113px;width:125.5px;height:51px;background:linear-gradient(#a8a8a8,#9a9a9a 55%,#747474 63%,#5e5e5e);border-radius:4px 4px 0 0;box-shadow:inset 0 0 0 1.5px #a6a6a6"></div>
<div style="position:absolute;left:388.5px;top:1117.5px;width:114.5px;height:29.5px;background:rgb(76,76,76);border-radius:3px;box-shadow:0 0 0 1px rgba(0,0,0,0.35),inset 0 1px 1px rgba(0,0,0,0.25)"></div>
<div style="position:absolute;left:510.2px;top:1113px;width:125.5px;height:51px;background:linear-gradient(#a8a8a8,#9a9a9a 55%,#747474 63%,#5e5e5e);border-radius:4px 4px 0 0;box-shadow:inset 0 0 0 1.5px #a6a6a6"></div>
<div style="position:absolute;left:515.7px;top:1117.5px;width:114.5px;height:29.5px;background:rgb(102,102,102);border-radius:3px;box-shadow:0 0 0 1px rgba(0,0,0,0.35),inset 0 1px 1px rgba(0,0,0,0.25)"></div>
<div style="position:absolute;left:637.4px;top:1113px;width:125.5px;height:51px;background:linear-gradient(#a8a8a8,#9a9a9a 55%,#747474 63%,#5e5e5e);border-radius:4px 4px 0 0;box-shadow:inset 0 0 0 1.5px #a6a6a6"></div>
<div style="position:absolute;left:642.9px;top:1117.5px;width:114.5px;height:29.5px;background:rgb(128,128,128);border-radius:3px;box-shadow:0 0 0 1px rgba(0,0,0,0.35),inset 0 1px 1px rgba(0,0,0,0.25)"></div>
<div style="position:absolute;left:764.6px;top:1113px;width:125.5px;height:51px;background:linear-gradient(#a8a8a8,#9a9a9a 55%,#747474 63%,#5e5e5e);border-radius:4px 4px 0 0;box-shadow:inset 0 0 0 1.5px #a6a6a6"></div>
<div style="position:absolute;left:770.1px;top:1117.5px;width:114.5px;height:29.5px;background:rgb(153,153,153);border-radius:3px;box-shadow:0 0 0 1px rgba(0,0,0,0.35),inset 0 1px 1px rgba(0,0,0,0.25)"></div>
<div style="position:absolute;left:891.8px;top:1113px;width:125.5px;height:51px;background:linear-gradient(#a8a8a8,#9a9a9a 55%,#747474 63%,#5e5e5e);border-radius:4px 4px 0 0;box-shadow:inset 0 0 0 1.5px #a6a6a6"></div>
<div style="position:absolute;left:897.3px;top:1117.5px;width:114.5px;height:29.5px;background:rgb(178,178,178);border-radius:3px;box-shadow:0 0 0 1px rgba(0,0,0,0.35),inset 0 1px 1px rgba(0,0,0,0.25)"></div>
<div style="position:absolute;left:1019.0px;top:1113px;width:125.5px;height:51px;background:linear-gradient(#a8a8a8,#9a9a9a 55%,#747474 63%,#5e5e5e);border-radius:4px 4px 0 0;box-shadow:inset 0 0 0 1.5px #a6a6a6"></div>
<div style="position:absolute;left:1024.5px;top:1117.5px;width:114.5px;height:29.5px;background:rgb(204,204,204);border-radius:3px;box-shadow:0 0 0 1px rgba(0,0,0,0.35),inset 0 1px 1px rgba(0,0,0,0.25)"></div>
<div style="position:absolute;left:1146.2px;top:1113px;width:125.5px;height:51px;background:linear-gradient(#a8a8a8,#9a9a9a 55%,#747474 63%,#5e5e5e);border-radius:4px 4px 0 0;box-shadow:inset 0 0 0 1.5px #a6a6a6"></div>
<div style="position:absolute;left:1151.7px;top:1117.5px;width:114.5px;height:29.5px;background:rgb(230,230,230);border-radius:3px;box-shadow:0 0 0 1px rgba(0,0,0,0.35),inset 0 1px 1px rgba(0,0,0,0.25)"></div>
<div style="position:absolute;left:1273.4px;top:1113px;width:125.5px;height:51px;background:linear-gradient(#161616,#262626 50%,#333);border-radius:4px 4px 0 0"></div>
<div style="position:absolute;left:1278.4px;top:1117px;width:117.5px;height:31px;background:#fff;border-radius:3px"></div>
<div style="position:absolute;left:1649px;top:1113px;width:40px;height:15px;background:linear-gradient(#aaa,#888);border-radius:4px 4px 0 0"></div>
<div style="position:absolute;left:1662px;top:1115px;width:12px;height:12px;border-radius:50%;background:#999"></div>
<svg style="position:absolute;left:1664px;top:1117px" width="9" height="6"><path d="M0.5 5.5L4.5 0.5L8.5 5.5Z" fill="#333"/></svg>
<div style="position:absolute;left:1649px;top:1129px;width:40px;height:35px;background:linear-gradient(#9a9a9a,#777)"></div>
<div style="position:absolute;left:1656px;top:1133px;width:21px;height:23px;border:2px solid #222;border-radius:3px;background:#aaa"></div>
<div style="position:absolute;left:1662px;top:1139px;width:11px;height:12px;background:linear-gradient(#1a1a1a 50%,#000 50%)"></div>
<div style="position:absolute;left:1690.3px;top:1113px;width:37.7px;height:25px;background:linear-gradient(#b4b4b4,#8a8a8a)"></div>
<div style="position:absolute;left:1727.3px;top:1113px;width:1.3px;height:25px;background:#4a4a4a;z-index:1"></div>
<div style="position:absolute;left:1701.3px;top:1117.5px;width:16px;height:16px;border-radius:50%;background:linear-gradient(#888,#a0a0a0 60%,#bcbcbc)"></div>
<div style="position:absolute;left:1728.0px;top:1113px;width:37.7px;height:25px;background:linear-gradient(#b4b4b4,#8a8a8a)"></div>
<div style="position:absolute;left:1765.0px;top:1113px;width:1.3px;height:25px;background:#4a4a4a;z-index:1"></div>
<div style="position:absolute;left:1739.0px;top:1117.5px;width:16px;height:16px;border-radius:50%;background:linear-gradient(#888,#a0a0a0 60%,#bcbcbc)"></div>
<div style="position:absolute;left:1765.7px;top:1113px;width:37.7px;height:25px;background:linear-gradient(#b4b4b4,#8a8a8a)"></div>
<div style="position:absolute;left:1802.7px;top:1113px;width:1.3px;height:25px;background:#4a4a4a;z-index:1"></div>
<div style="position:absolute;left:1776.7px;top:1117.5px;width:16px;height:16px;border-radius:50%;background:linear-gradient(#888,#a0a0a0 60%,#bcbcbc)"></div>
<div style="position:absolute;left:1803.4px;top:1113px;width:37.7px;height:25px;background:linear-gradient(#b4b4b4,#8a8a8a)"></div>
<div style="position:absolute;left:1840.4px;top:1113px;width:1.3px;height:25px;background:#4a4a4a;z-index:1"></div>
<div style="position:absolute;left:1814.4px;top:1117.5px;width:16px;height:16px;border-radius:50%;background:linear-gradient(#888,#a0a0a0 60%,#bcbcbc)"></div>
<div style="position:absolute;left:1841.1px;top:1113px;width:37.7px;height:25px;background:linear-gradient(#b4b4b4,#8a8a8a)"></div>
<div style="position:absolute;left:1878.1px;top:1113px;width:1.3px;height:25px;background:#4a4a4a;z-index:1"></div>
<div style="position:absolute;left:1852.1px;top:1117.5px;width:16px;height:16px;border-radius:50%;background:linear-gradient(#888,#a0a0a0 60%,#bcbcbc)"></div>
<svg style="position:absolute;left:1701.3px;top:1117px" width="16" height="16" viewBox="-8 -8 16 16"><rect x="-3.5" y="-3.5" width="7" height="7" fill="#222"/></svg>
<svg style="position:absolute;left:1739.0px;top:1117px" width="16" height="16" viewBox="-8 -8 16 16"><path d="M-2.5 -4.5L4 0L-2.5 4.5Z" fill="#222"/></svg>
<svg style="position:absolute;left:1776.7px;top:1117px" width="16" height="16" viewBox="-8 -8 16 16"><path d="M-3 -4H-5V4H-3M3 -4H5V4H3" fill="none" stroke="#222" stroke-width="1.4"/><rect x="-1.5" y="-0.6" width="1" height="1.2" fill="#222"/><rect x="0.5" y="-0.6" width="1" height="1.2" fill="#222"/></svg>
<svg style="position:absolute;left:1814.4px;top:1117px" width="16" height="16" viewBox="-8 -8 16 16"><path d="M0 0C-2 -3 -5 -3 -5 0C-5 3 -2 3 0 0C2 -3 5 -3 5 0C5 3 2 3 0 0Z" fill="none" stroke="#222" stroke-width="1.5"/></svg>
<svg style="position:absolute;left:1852.1px;top:1117px" width="16" height="16" viewBox="-8 -8 16 16"><path d="M-4 -0.5A4 4 0 0 1 3 -2.5M4 0.5A4 4 0 0 1 -3 2.5" fill="none" stroke="#222" stroke-width="1.6"/><path d="M1.5 -4.5L4.5 -2L1 -1Z M-1.5 4.5L-4.5 2L-1 1Z" fill="#222"/></svg>
<div style="position:absolute;left:1879px;top:1113px;width:38px;height:25px;background:linear-gradient(#2a2a2a,#1a1a1a)"></div>
<div style="position:absolute;left:1889px;top:1117px;width:17px;height:17px;border-radius:50%;background:#2a2a2a"></div>
<div style="position:absolute;left:1690px;top:1139px;width:114px;height:25px;background:linear-gradient(#b4b4b4,#888);border-radius:3px 0 0 0;border-right:1px solid #555;box-sizing:border-box"></div>
<div style="position:absolute;left:1804px;top:1139px;width:113px;height:25px;background:linear-gradient(#b4b4b4,#888);border-radius:0 3px 0 0"></div>
<div style="position:absolute;left:1707.8px;top:1143.5px;width:16px;height:16px;border-radius:50%;background:linear-gradient(#7e7e7e,#9a9a9a 60%,#b4b4b4)"></div>
<div style="position:absolute;left:1885.8px;top:1143.5px;width:16px;height:16px;border-radius:50%;background:linear-gradient(#7e7e7e,#9a9a9a 60%,#b4b4b4)"></div>
<div style="position:absolute;left:26.60px;top:8.06px;font-size:10.8px;line-height:10.8px;color:#1a1a1a;transform:scaleX(0.9075);transform-origin:0 0;white-space:pre;">Calman 2025 Calman Ultimate for Business 134 Days Remaining  - Untitled</div>
<div style="position:absolute;left:30.50px;top:62.71px;font-size:10.5px;line-height:10.5px;color:#e8e8e8;transform:scaleX(0.9258);transform-origin:0 0;white-space:pre;">History 1</div>
<div style="position:absolute;left:1607.38px;top:63.72px;font-size:8.6px;line-height:8.6px;color:#fff;transform:scaleX(0.9500);transform-origin:0 0;white-space:pre;-webkit-text-stroke:0.25px #fff;">675</div>
<div style="position:absolute;left:1514.60px;top:57.34px;font-size:9.4px;line-height:9.4px;color:#f0f0f0;transform:scaleX(0.9339);transform-origin:0 0;white-space:pre;">X-Rite i1Pro 3</div>
<div style="position:absolute;left:1514.60px;top:68.64px;font-size:9.4px;line-height:9.4px;color:#f0f0f0;transform:scaleX(0.9839);transform-origin:0 0;white-space:pre;">Direct View</div>
<div style="position:absolute;left:1639.00px;top:57.34px;font-size:9.4px;line-height:9.4px;color:#f0f0f0;transform:scaleX(0.9817);transform-origin:0 0;white-space:pre;">Mobile Forge</div>
<div style="position:absolute;left:1753.10px;top:57.34px;font-size:9.4px;line-height:9.4px;color:#f0f0f0;transform:scaleX(0.9727);transform-origin:0 0;white-space:pre;">Direct Display Control</div>
<div style="position:absolute;left:28.25px;top:155.14px;font-size:46.5px;line-height:46.5px;color:#f2f2f2;transform:scaleX(0.9243);transform-origin:0 0;white-space:pre;-webkit-text-stroke:0.5px #f2f2f2;">Grayscale</div>
<div style="position:absolute;left:170.16px;top:238.26px;font-size:16px;line-height:16px;color:#e2e2e2;transform:scaleX(1.0406);transform-origin:0 0;white-space:pre;">DeltaE 2000</div>
<div style="position:absolute;left:41.77px;top:526.06px;font-size:16px;line-height:16px;color:#e2e2e2;transform:scaleX(1.0700);transform-origin:0 0;white-space:pre;-webkit-text-stroke:0.2px #e2e2e2;">0</div>
<div style="position:absolute;left:32.25px;top:499.90px;font-size:16px;line-height:16px;color:#e2e2e2;transform:scaleX(1.0700);transform-origin:0 0;white-space:pre;-webkit-text-stroke:0.2px #e2e2e2;">10</div>
<div style="position:absolute;left:32.25px;top:473.74px;font-size:16px;line-height:16px;color:#e2e2e2;transform:scaleX(1.0700);transform-origin:0 0;white-space:pre;-webkit-text-stroke:0.2px #e2e2e2;">20</div>
<div style="position:absolute;left:32.25px;top:447.58px;font-size:16px;line-height:16px;color:#e2e2e2;transform:scaleX(1.0700);transform-origin:0 0;white-space:pre;-webkit-text-stroke:0.2px #e2e2e2;">30</div>
<div style="position:absolute;left:32.25px;top:421.42px;font-size:16px;line-height:16px;color:#e2e2e2;transform:scaleX(1.0700);transform-origin:0 0;white-space:pre;-webkit-text-stroke:0.2px #e2e2e2;">40</div>
<div style="position:absolute;left:32.25px;top:395.26px;font-size:16px;line-height:16px;color:#e2e2e2;transform:scaleX(1.0700);transform-origin:0 0;white-space:pre;-webkit-text-stroke:0.2px #e2e2e2;">50</div>
<div style="position:absolute;left:32.25px;top:369.10px;font-size:16px;line-height:16px;color:#e2e2e2;transform:scaleX(1.0700);transform-origin:0 0;white-space:pre;-webkit-text-stroke:0.2px #e2e2e2;">60</div>
<div style="position:absolute;left:32.25px;top:342.94px;font-size:16px;line-height:16px;color:#e2e2e2;transform:scaleX(1.0700);transform-origin:0 0;white-space:pre;-webkit-text-stroke:0.2px #e2e2e2;">70</div>
<div style="position:absolute;left:32.25px;top:316.78px;font-size:16px;line-height:16px;color:#e2e2e2;transform:scaleX(1.0700);transform-origin:0 0;white-space:pre;-webkit-text-stroke:0.2px #e2e2e2;">80</div>
<div style="position:absolute;left:32.25px;top:290.62px;font-size:16px;line-height:16px;color:#e2e2e2;transform:scaleX(1.0700);transform-origin:0 0;white-space:pre;-webkit-text-stroke:0.2px #e2e2e2;">90</div>
<div style="position:absolute;left:22.73px;top:264.46px;font-size:16px;line-height:16px;color:#e2e2e2;transform:scaleX(1.0700);transform-origin:0 0;white-space:pre;-webkit-text-stroke:0.2px #e2e2e2;">100</div>
<div style="position:absolute;left:47.69px;top:557.46px;font-size:16px;line-height:16px;color:#e2e2e2;transform:scaleX(1.0700);transform-origin:0 0;white-space:pre;-webkit-text-stroke:0.2px #e2e2e2;">0</div>
<div style="position:absolute;left:95.12px;top:557.46px;font-size:16px;line-height:16px;color:#e2e2e2;transform:scaleX(1.0700);transform-origin:0 0;white-space:pre;-webkit-text-stroke:0.2px #e2e2e2;">2</div>
<div style="position:absolute;left:142.56px;top:557.46px;font-size:16px;line-height:16px;color:#e2e2e2;transform:scaleX(1.0700);transform-origin:0 0;white-space:pre;-webkit-text-stroke:0.2px #e2e2e2;">4</div>
<div style="position:absolute;left:190.00px;top:557.46px;font-size:16px;line-height:16px;color:#e2e2e2;transform:scaleX(1.0700);transform-origin:0 0;white-space:pre;-webkit-text-stroke:0.2px #e2e2e2;">6</div>
<div style="position:absolute;left:237.44px;top:557.46px;font-size:16px;line-height:16px;color:#e2e2e2;transform:scaleX(1.0700);transform-origin:0 0;white-space:pre;-webkit-text-stroke:0.2px #e2e2e2;">8</div>
<div style="position:absolute;left:279.59px;top:557.46px;font-size:16px;line-height:16px;color:#e2e2e2;transform:scaleX(1.0700);transform-origin:0 0;white-space:pre;-webkit-text-stroke:0.2px #e2e2e2;">10</div>
<div style="position:absolute;left:327.03px;top:557.46px;font-size:16px;line-height:16px;color:#e2e2e2;transform:scaleX(1.0700);transform-origin:0 0;white-space:pre;-webkit-text-stroke:0.2px #e2e2e2;">12</div>
<div style="position:absolute;left:374.47px;top:557.46px;font-size:16px;line-height:16px;color:#e2e2e2;transform:scaleX(1.0700);transform-origin:0 0;white-space:pre;-webkit-text-stroke:0.2px #e2e2e2;">14</div>
<div style="position:absolute;left:751.22px;top:160.66px;font-size:16px;line-height:16px;color:#e2e2e2;transform:scaleX(0.9840);transform-origin:0 0;white-space:pre;">RGB Balance</div>
<div style="position:absolute;left:452.83px;top:174.76px;font-size:16px;line-height:16px;color:#e2e2e2;transform:scaleX(1.0700);transform-origin:0 0;white-space:pre;-webkit-text-stroke:0.2px #e2e2e2;">120</div>
<div style="position:absolute;left:454.10px;top:220.46px;font-size:16px;line-height:16px;color:#e2e2e2;transform:scaleX(1.0700);transform-origin:0 0;white-space:pre;-webkit-text-stroke:0.2px #e2e2e2;">115</div>
<div style="position:absolute;left:454.10px;top:266.16px;font-size:16px;line-height:16px;color:#e2e2e2;transform:scaleX(1.0700);transform-origin:0 0;white-space:pre;-webkit-text-stroke:0.2px #e2e2e2;">110</div>
<div style="position:absolute;left:452.83px;top:311.86px;font-size:16px;line-height:16px;color:#e2e2e2;transform:scaleX(1.0700);transform-origin:0 0;white-space:pre;-webkit-text-stroke:0.2px #e2e2e2;">105</div>
<div style="position:absolute;left:452.83px;top:357.56px;font-size:16px;line-height:16px;color:#e2e2e2;transform:scaleX(1.0700);transform-origin:0 0;white-space:pre;-webkit-text-stroke:0.2px #e2e2e2;">100</div>
<div style="position:absolute;left:462.35px;top:403.26px;font-size:16px;line-height:16px;color:#e2e2e2;transform:scaleX(1.0700);transform-origin:0 0;white-space:pre;-webkit-text-stroke:0.2px #e2e2e2;">95</div>
<div style="position:absolute;left:462.35px;top:448.96px;font-size:16px;line-height:16px;color:#e2e2e2;transform:scaleX(1.0700);transform-origin:0 0;white-space:pre;-webkit-text-stroke:0.2px #e2e2e2;">90</div>
<div style="position:absolute;left:462.35px;top:494.66px;font-size:16px;line-height:16px;color:#e2e2e2;transform:scaleX(1.0700);transform-origin:0 0;white-space:pre;-webkit-text-stroke:0.2px #e2e2e2;">85</div>
<div style="position:absolute;left:462.35px;top:540.36px;font-size:16px;line-height:16px;color:#e2e2e2;transform:scaleX(1.0700);transform-origin:0 0;white-space:pre;-webkit-text-stroke:0.2px #e2e2e2;">80</div>
<div style="position:absolute;left:484.88px;top:557.46px;font-size:16px;line-height:16px;color:#e2e2e2;transform:scaleX(1.0700);transform-origin:0 0;white-space:pre;-webkit-text-stroke:0.2px #e2e2e2;">0</div>
<div style="position:absolute;left:545.00px;top:557.46px;font-size:16px;line-height:16px;color:#e2e2e2;transform:scaleX(1.0700);transform-origin:0 0;white-space:pre;-webkit-text-stroke:0.2px #e2e2e2;">10</div>
<div style="position:absolute;left:610.94px;top:557.46px;font-size:16px;line-height:16px;color:#e2e2e2;transform:scaleX(1.0700);transform-origin:0 0;white-space:pre;-webkit-text-stroke:0.2px #e2e2e2;">20</div>
<div style="position:absolute;left:676.35px;top:557.46px;font-size:16px;line-height:16px;color:#e2e2e2;transform:scaleX(1.0700);transform-origin:0 0;white-space:pre;-webkit-text-stroke:0.2px #e2e2e2;">30</div>
<div style="position:absolute;left:741.76px;top:557.46px;font-size:16px;line-height:16px;color:#e2e2e2;transform:scaleX(1.0700);transform-origin:0 0;white-space:pre;-webkit-text-stroke:0.2px #e2e2e2;">40</div>
<div style="position:absolute;left:807.17px;top:557.46px;font-size:16px;line-height:16px;color:#e2e2e2;transform:scaleX(1.0700);transform-origin:0 0;white-space:pre;-webkit-text-stroke:0.2px #e2e2e2;">50</div>
<div style="position:absolute;left:872.58px;top:557.46px;font-size:16px;line-height:16px;color:#e2e2e2;transform:scaleX(1.0700);transform-origin:0 0;white-space:pre;-webkit-text-stroke:0.2px #e2e2e2;">60</div>
<div style="position:absolute;left:937.99px;top:557.46px;font-size:16px;line-height:16px;color:#e2e2e2;transform:scaleX(1.0700);transform-origin:0 0;white-space:pre;-webkit-text-stroke:0.2px #e2e2e2;">70</div>
<div style="position:absolute;left:1003.40px;top:557.46px;font-size:16px;line-height:16px;color:#e2e2e2;transform:scaleX(1.0700);transform-origin:0 0;white-space:pre;-webkit-text-stroke:0.2px #e2e2e2;">80</div>
<div style="position:absolute;left:1068.81px;top:557.46px;font-size:16px;line-height:16px;color:#e2e2e2;transform:scaleX(1.0700);transform-origin:0 0;white-space:pre;-webkit-text-stroke:0.2px #e2e2e2;">90</div>
<div style="position:absolute;left:1128.93px;top:557.46px;font-size:16px;line-height:16px;color:#e2e2e2;transform:scaleX(1.0700);transform-origin:0 0;white-space:pre;-webkit-text-stroke:0.2px #e2e2e2;">100</div>
<div style="position:absolute;left:1472.60px;top:160.86px;font-size:16px;line-height:16px;color:#e2e2e2;transform:scaleX(1.0534);transform-origin:0 0;white-space:pre;">Gamma Log/Log</div>
<div style="position:absolute;left:1202.57px;top:533.76px;font-size:16px;line-height:16px;color:#e2e2e2;transform:scaleX(1.0700);transform-origin:0 0;white-space:pre;-webkit-text-stroke:0.2px #e2e2e2;">1</div>
<div style="position:absolute;left:1188.29px;top:488.76px;font-size:16px;line-height:16px;color:#e2e2e2;transform:scaleX(1.0700);transform-origin:0 0;white-space:pre;-webkit-text-stroke:0.2px #e2e2e2;">1,2</div>
<div style="position:absolute;left:1188.29px;top:443.56px;font-size:16px;line-height:16px;color:#e2e2e2;transform:scaleX(1.0700);transform-origin:0 0;white-space:pre;-webkit-text-stroke:0.2px #e2e2e2;">1,4</div>
<div style="position:absolute;left:1188.29px;top:396.86px;font-size:16px;line-height:16px;color:#e2e2e2;transform:scaleX(1.0700);transform-origin:0 0;white-space:pre;-webkit-text-stroke:0.2px #e2e2e2;">1,6</div>
<div style="position:absolute;left:1188.29px;top:350.46px;font-size:16px;line-height:16px;color:#e2e2e2;transform:scaleX(1.0700);transform-origin:0 0;white-space:pre;-webkit-text-stroke:0.2px #e2e2e2;">1,8</div>
<div style="position:absolute;left:1202.57px;top:305.46px;font-size:16px;line-height:16px;color:#e2e2e2;transform:scaleX(1.0700);transform-origin:0 0;white-space:pre;-webkit-text-stroke:0.2px #e2e2e2;">2</div>
<div style="position:absolute;left:1188.29px;top:260.16px;font-size:16px;line-height:16px;color:#e2e2e2;transform:scaleX(1.0700);transform-origin:0 0;white-space:pre;-webkit-text-stroke:0.2px #e2e2e2;">2,2</div>
<div style="position:absolute;left:1188.29px;top:214.76px;font-size:16px;line-height:16px;color:#e2e2e2;transform:scaleX(1.0700);transform-origin:0 0;white-space:pre;-webkit-text-stroke:0.2px #e2e2e2;">2,4</div>
<div style="position:absolute;left:1214.98px;top:557.46px;font-size:16px;line-height:16px;color:#e2e2e2;transform:scaleX(1.0700);transform-origin:0 0;white-space:pre;-webkit-text-stroke:0.2px #e2e2e2;">0</div>
<div style="position:absolute;left:1275.59px;top:557.46px;font-size:16px;line-height:16px;color:#e2e2e2;transform:scaleX(1.0700);transform-origin:0 0;white-space:pre;-webkit-text-stroke:0.2px #e2e2e2;">10</div>
<div style="position:absolute;left:1342.02px;top:557.46px;font-size:16px;line-height:16px;color:#e2e2e2;transform:scaleX(1.0700);transform-origin:0 0;white-space:pre;-webkit-text-stroke:0.2px #e2e2e2;">20</div>
<div style="position:absolute;left:1407.92px;top:557.46px;font-size:16px;line-height:16px;color:#e2e2e2;transform:scaleX(1.0700);transform-origin:0 0;white-space:pre;-webkit-text-stroke:0.2px #e2e2e2;">30</div>
<div style="position:absolute;left:1473.82px;top:557.46px;font-size:16px;line-height:16px;color:#e2e2e2;transform:scaleX(1.0700);transform-origin:0 0;white-space:pre;-webkit-text-stroke:0.2px #e2e2e2;">40</div>
<div style="position:absolute;left:1539.72px;top:557.46px;font-size:16px;line-height:16px;color:#e2e2e2;transform:scaleX(1.0700);transform-origin:0 0;white-space:pre;-webkit-text-stroke:0.2px #e2e2e2;">50</div>
<div style="position:absolute;left:1605.62px;top:557.46px;font-size:16px;line-height:16px;color:#e2e2e2;transform:scaleX(1.0700);transform-origin:0 0;white-space:pre;-webkit-text-stroke:0.2px #e2e2e2;">60</div>
<div style="position:absolute;left:1671.52px;top:557.46px;font-size:16px;line-height:16px;color:#e2e2e2;transform:scaleX(1.0700);transform-origin:0 0;white-space:pre;-webkit-text-stroke:0.2px #e2e2e2;">70</div>
<div style="position:absolute;left:1737.42px;top:557.46px;font-size:16px;line-height:16px;color:#e2e2e2;transform:scaleX(1.0700);transform-origin:0 0;white-space:pre;-webkit-text-stroke:0.2px #e2e2e2;">80</div>
<div style="position:absolute;left:1803.32px;top:557.46px;font-size:16px;line-height:16px;color:#e2e2e2;transform:scaleX(1.0700);transform-origin:0 0;white-space:pre;-webkit-text-stroke:0.2px #e2e2e2;">90</div>
<div style="position:absolute;left:1863.93px;top:557.46px;font-size:16px;line-height:16px;color:#e2e2e2;transform:scaleX(1.0700);transform-origin:0 0;white-space:pre;-webkit-text-stroke:0.2px #e2e2e2;">100</div>
<div style="position:absolute;left:100.10px;top:589.22px;font-size:34px;line-height:34px;color:#f4f4f4;transform:scaleX(0.9940);transform-origin:0 0;white-space:pre;-webkit-text-stroke:0.45px #f4f4f4;">Avg dE2000: 2,4</div>
<div style="position:absolute;left:572.90px;top:589.22px;font-size:34px;line-height:34px;color:#f4f4f4;transform:scaleX(0.9567);transform-origin:0 0;white-space:pre;-webkit-text-stroke:0.45px #f4f4f4;">Avg CCT: 6322</div>
<div style="position:absolute;left:993.98px;top:589.22px;font-size:34px;line-height:34px;color:#f4f4f4;transform:scaleX(1.0178);transform-origin:0 0;white-space:pre;-webkit-text-stroke:0.45px #f4f4f4;">Contrast Ratio: 17377</div>
<div style="position:absolute;left:1498.00px;top:589.22px;font-size:34px;line-height:34px;color:#f4f4f4;transform:scaleX(1.0170);transform-origin:0 0;white-space:pre;-webkit-text-stroke:0.45px #f4f4f4;">Total Gamma: 2,02</div>
<div style="position:absolute;left:359.82px;top:769.53px;font-size:14.5px;line-height:14.5px;color:#f8f8f8;transform:scaleX(0.9700);transform-origin:0 0;white-space:pre;">0</div>
<div style="position:absolute;left:487.73px;top:769.53px;font-size:14.5px;line-height:14.5px;color:#f8f8f8;transform:scaleX(0.9700);transform-origin:0 0;white-space:pre;">10</div>
<div style="position:absolute;left:620.53px;top:769.53px;font-size:14.5px;line-height:14.5px;color:#f8f8f8;transform:scaleX(0.9700);transform-origin:0 0;white-space:pre;">20</div>
<div style="position:absolute;left:752.84px;top:769.53px;font-size:14.5px;line-height:14.5px;color:#f8f8f8;transform:scaleX(0.9700);transform-origin:0 0;white-space:pre;">30</div>
<div style="position:absolute;left:885.15px;top:769.53px;font-size:14.5px;line-height:14.5px;color:#f8f8f8;transform:scaleX(0.9700);transform-origin:0 0;white-space:pre;">40</div>
<div style="position:absolute;left:1017.46px;top:769.53px;font-size:14.5px;line-height:14.5px;color:#f8f8f8;transform:scaleX(0.9700);transform-origin:0 0;white-space:pre;">50</div>
<div style="position:absolute;left:1149.77px;top:769.53px;font-size:14.5px;line-height:14.5px;color:#f8f8f8;transform:scaleX(0.9700);transform-origin:0 0;white-space:pre;">60</div>
<div style="position:absolute;left:1282.08px;top:769.53px;font-size:14.5px;line-height:14.5px;color:#f8f8f8;transform:scaleX(0.9700);transform-origin:0 0;white-space:pre;">70</div>
<div style="position:absolute;left:1414.39px;top:769.53px;font-size:14.5px;line-height:14.5px;color:#f8f8f8;transform:scaleX(0.9700);transform-origin:0 0;white-space:pre;">80</div>
<div style="position:absolute;left:1546.70px;top:769.53px;font-size:14.5px;line-height:14.5px;color:#f8f8f8;transform:scaleX(0.9700);transform-origin:0 0;white-space:pre;">90</div>
<div style="position:absolute;left:1674.61px;top:769.53px;font-size:14.5px;line-height:14.5px;color:#f8f8f8;transform:scaleX(0.9700);transform-origin:0 0;white-space:pre;">100</div>
<div style="position:absolute;left:16.77px;top:823.34px;font-size:33.5px;line-height:33.5px;color:#f4f4f4;transform:scaleX(1.0326);transform-origin:0 0;white-space:pre;-webkit-text-stroke:0.35px #f4f4f4;">Current Reading</div>
<div style="position:absolute;left:17.80px;top:876.87px;font-size:28.5px;line-height:28.5px;color:#f4f4f4;white-space:pre;-webkit-text-stroke:0.35px #f4f4f4;">x: 0,3147</div>
<div style="position:absolute;left:17.80px;top:923.57px;font-size:28.5px;line-height:28.5px;color:#f4f4f4;transform:scaleX(1.0137);transform-origin:0 0;white-space:pre;-webkit-text-stroke:0.35px #f4f4f4;">y: 0,3289</div>
<div style="position:absolute;left:18.30px;top:971.07px;font-size:28.5px;line-height:28.5px;color:#f4f4f4;white-space:pre;-webkit-text-stroke:0.35px #f4f4f4;">fL: 120,19</div>
<div style="position:absolute;left:16.73px;top:1017.67px;font-size:28.5px;line-height:28.5px;color:#f4f4f4;transform:scaleX(1.0717);transform-origin:0 0;white-space:pre;-webkit-text-stroke:0.35px #f4f4f4;">cd/m²: 411,79</div>
<div style="position:absolute;left:423.09px;top:1037.46px;font-size:16px;line-height:16px;color:#dcdcdc;transform:scaleX(1.0700);transform-origin:0 0;white-space:pre;-webkit-text-stroke:0.2px #dcdcdc;">0,29</div>
<div style="position:absolute;left:482.45px;top:1037.46px;font-size:16px;line-height:16px;color:#dcdcdc;transform:scaleX(1.0700);transform-origin:0 0;white-space:pre;-webkit-text-stroke:0.2px #dcdcdc;">0,3</div>
<div style="position:absolute;left:532.29px;top:1037.46px;font-size:16px;line-height:16px;color:#dcdcdc;transform:scaleX(1.0700);transform-origin:0 0;white-space:pre;-webkit-text-stroke:0.2px #dcdcdc;">0,31</div>
<div style="position:absolute;left:586.89px;top:1037.46px;font-size:16px;line-height:16px;color:#dcdcdc;transform:scaleX(1.0700);transform-origin:0 0;white-space:pre;-webkit-text-stroke:0.2px #dcdcdc;">0,32</div>
<div style="position:absolute;left:641.49px;top:1037.46px;font-size:16px;line-height:16px;color:#dcdcdc;transform:scaleX(1.0700);transform-origin:0 0;white-space:pre;-webkit-text-stroke:0.2px #dcdcdc;">0,33</div>
<div style="position:absolute;left:386.77px;top:994.76px;font-size:16px;line-height:16px;color:#dcdcdc;transform:scaleX(1.0700);transform-origin:0 0;white-space:pre;-webkit-text-stroke:0.2px #dcdcdc;">0,31</div>
<div style="position:absolute;left:386.77px;top:955.76px;font-size:16px;line-height:16px;color:#dcdcdc;transform:scaleX(1.0700);transform-origin:0 0;white-space:pre;-webkit-text-stroke:0.2px #dcdcdc;">0,32</div>
<div style="position:absolute;left:386.77px;top:917.36px;font-size:16px;line-height:16px;color:#dcdcdc;transform:scaleX(1.0700);transform-origin:0 0;white-space:pre;-webkit-text-stroke:0.2px #dcdcdc;">0,33</div>
<div style="position:absolute;left:386.77px;top:877.86px;font-size:16px;line-height:16px;color:#dcdcdc;transform:scaleX(1.0700);transform-origin:0 0;white-space:pre;-webkit-text-stroke:0.2px #dcdcdc;">0,34</div>
<div style="position:absolute;left:386.77px;top:837.16px;font-size:16px;line-height:16px;color:#dcdcdc;transform:scaleX(1.0700);transform-origin:0 0;white-space:pre;-webkit-text-stroke:0.2px #dcdcdc;">0,35</div>
<div style="position:absolute;left:736.90px;top:842.29px;font-size:17.5px;line-height:17.5px;color:#f6f6f6;font-weight:bold;transform:scaleX(0.9780);transform-origin:0 0;white-space:pre;">x: CIE31</div>
<div style="position:absolute;left:902.70px;top:841.06px;font-size:18px;line-height:18px;color:#f2f2f2;transform:scaleX(0.9850);transform-origin:0 0;white-space:pre;">0,360</div>
<div style="position:absolute;left:987.05px;top:841.06px;font-size:18px;line-height:18px;color:#f2f2f2;transform:scaleX(0.9850);transform-origin:0 0;white-space:pre;">0,323</div>
<div style="position:absolute;left:1071.40px;top:841.06px;font-size:18px;line-height:18px;color:#f2f2f2;transform:scaleX(0.9850);transform-origin:0 0;white-space:pre;">0,317</div>
<div style="position:absolute;left:1155.75px;top:841.06px;font-size:18px;line-height:18px;color:#f2f2f2;transform:scaleX(0.9850);transform-origin:0 0;white-space:pre;">0,315</div>
<div style="position:absolute;left:1240.10px;top:841.06px;font-size:18px;line-height:18px;color:#f2f2f2;transform:scaleX(0.9850);transform-origin:0 0;white-space:pre;">0,315</div>
<div style="position:absolute;left:1324.45px;top:841.06px;font-size:18px;line-height:18px;color:#f2f2f2;transform:scaleX(0.9850);transform-origin:0 0;white-space:pre;">0,315</div>
<div style="position:absolute;left:1408.80px;top:841.06px;font-size:18px;line-height:18px;color:#f2f2f2;transform:scaleX(0.9850);transform-origin:0 0;white-space:pre;">0,314</div>
<div style="position:absolute;left:1493.15px;top:841.06px;font-size:18px;line-height:18px;color:#f2f2f2;transform:scaleX(0.9850);transform-origin:0 0;white-space:pre;">0,316</div>
<div style="position:absolute;left:1577.50px;top:841.06px;font-size:18px;line-height:18px;color:#f2f2f2;transform:scaleX(0.9850);transform-origin:0 0;white-space:pre;">0,315</div>
<div style="position:absolute;left:1661.85px;top:841.06px;font-size:18px;line-height:18px;color:#f2f2f2;transform:scaleX(0.9850);transform-origin:0 0;white-space:pre;">0,314</div>
<div style="position:absolute;left:1746.20px;top:841.06px;font-size:18px;line-height:18px;color:#f2f2f2;transform:scaleX(0.9850);transform-origin:0 0;white-space:pre;">0,315</div>
<div style="position:absolute;left:736.90px;top:871.99px;font-size:17.5px;line-height:17.5px;color:#f6f6f6;font-weight:bold;transform:scaleX(0.9780);transform-origin:0 0;white-space:pre;">y: CIE31</div>
<div style="position:absolute;left:902.70px;top:870.76px;font-size:18px;line-height:18px;color:#f2f2f2;transform:scaleX(0.9850);transform-origin:0 0;white-space:pre;">0,194</div>
<div style="position:absolute;left:987.05px;top:870.76px;font-size:18px;line-height:18px;color:#f2f2f2;transform:scaleX(0.9850);transform-origin:0 0;white-space:pre;">0,344</div>
<div style="position:absolute;left:1071.40px;top:870.76px;font-size:18px;line-height:18px;color:#f2f2f2;transform:scaleX(0.9850);transform-origin:0 0;white-space:pre;">0,331</div>
<div style="position:absolute;left:1155.75px;top:870.76px;font-size:18px;line-height:18px;color:#f2f2f2;transform:scaleX(0.9850);transform-origin:0 0;white-space:pre;">0,332</div>
<div style="position:absolute;left:1240.10px;top:870.76px;font-size:18px;line-height:18px;color:#f2f2f2;transform:scaleX(0.9850);transform-origin:0 0;white-space:pre;">0,330</div>
<div style="position:absolute;left:1324.45px;top:870.76px;font-size:18px;line-height:18px;color:#f2f2f2;transform:scaleX(0.9850);transform-origin:0 0;white-space:pre;">0,330</div>
<div style="position:absolute;left:1408.80px;top:870.76px;font-size:18px;line-height:18px;color:#f2f2f2;transform:scaleX(0.9850);transform-origin:0 0;white-space:pre;">0,329</div>
<div style="position:absolute;left:1493.15px;top:870.76px;font-size:18px;line-height:18px;color:#f2f2f2;transform:scaleX(0.9850);transform-origin:0 0;white-space:pre;">0,328</div>
<div style="position:absolute;left:1577.50px;top:870.76px;font-size:18px;line-height:18px;color:#f2f2f2;transform:scaleX(0.9850);transform-origin:0 0;white-space:pre;">0,329</div>
<div style="position:absolute;left:1661.85px;top:870.76px;font-size:18px;line-height:18px;color:#f2f2f2;transform:scaleX(0.9850);transform-origin:0 0;white-space:pre;">0,328</div>
<div style="position:absolute;left:1746.20px;top:870.76px;font-size:18px;line-height:18px;color:#f2f2f2;transform:scaleX(0.9850);transform-origin:0 0;white-space:pre;">0,329</div>
<div style="position:absolute;left:736.90px;top:901.69px;font-size:17.5px;line-height:17.5px;color:#f6f6f6;font-weight:bold;transform:scaleX(0.9083);transform-origin:0 0;white-space:pre;">Y</div>
<div style="position:absolute;left:902.70px;top:900.46px;font-size:18px;line-height:18px;color:#f2f2f2;transform:scaleX(0.9850);transform-origin:0 0;white-space:pre;">0,024</div>
<div style="position:absolute;left:987.05px;top:900.46px;font-size:18px;line-height:18px;color:#f2f2f2;transform:scaleX(0.9850);transform-origin:0 0;white-space:pre;">2,870</div>
<div style="position:absolute;left:1070.42px;top:900.46px;font-size:18px;line-height:18px;color:#f2f2f2;transform:scaleX(0.9850);transform-origin:0 0;white-space:pre;">13,227</div>
<div style="position:absolute;left:1155.75px;top:900.46px;font-size:18px;line-height:18px;color:#f2f2f2;transform:scaleX(0.9850);transform-origin:0 0;white-space:pre;">32,843</div>
<div style="position:absolute;left:1240.10px;top:900.46px;font-size:18px;line-height:18px;color:#f2f2f2;transform:scaleX(0.9850);transform-origin:0 0;white-space:pre;">63,234</div>
<div style="position:absolute;left:1323.47px;top:900.46px;font-size:18px;line-height:18px;color:#f2f2f2;transform:scaleX(0.9850);transform-origin:0 0;white-space:pre;">104,972</div>
<div style="position:absolute;left:1407.82px;top:900.46px;font-size:18px;line-height:18px;color:#f2f2f2;transform:scaleX(0.9850);transform-origin:0 0;white-space:pre;">151,664</div>
<div style="position:absolute;left:1493.15px;top:900.46px;font-size:18px;line-height:18px;color:#f2f2f2;transform:scaleX(0.9850);transform-origin:0 0;white-space:pre;">205,009</div>
<div style="position:absolute;left:1577.50px;top:900.46px;font-size:18px;line-height:18px;color:#f2f2f2;transform:scaleX(0.9850);transform-origin:0 0;white-space:pre;">268,609</div>
<div style="position:absolute;left:1661.85px;top:900.46px;font-size:18px;line-height:18px;color:#f2f2f2;transform:scaleX(0.9850);transform-origin:0 0;white-space:pre;">337,948</div>
<div style="position:absolute;left:1746.20px;top:900.46px;font-size:18px;line-height:18px;color:#f2f2f2;transform:scaleX(0.9850);transform-origin:0 0;white-space:pre;">411,787</div>
<div style="position:absolute;left:736.90px;top:931.39px;font-size:17.5px;line-height:17.5px;color:#f6f6f6;font-weight:bold;transform:scaleX(1.0384);transform-origin:0 0;white-space:pre;">Target Y</div>
<div style="position:absolute;left:902.70px;top:930.16px;font-size:18px;line-height:18px;color:#f2f2f2;transform:scaleX(0.9850);transform-origin:0 0;white-space:pre;">0,000</div>
<div style="position:absolute;left:987.05px;top:930.16px;font-size:18px;line-height:18px;color:#f2f2f2;transform:scaleX(0.9850);transform-origin:0 0;white-space:pre;">4,254</div>
<div style="position:absolute;left:1070.42px;top:930.16px;font-size:18px;line-height:18px;color:#f2f2f2;transform:scaleX(0.9850);transform-origin:0 0;white-space:pre;">13,632</div>
<div style="position:absolute;left:1155.75px;top:930.16px;font-size:18px;line-height:18px;color:#f2f2f2;transform:scaleX(0.9850);transform-origin:0 0;white-space:pre;">29,761</div>
<div style="position:absolute;left:1240.10px;top:930.16px;font-size:18px;line-height:18px;color:#f2f2f2;transform:scaleX(0.9850);transform-origin:0 0;white-space:pre;">54,713</div>
<div style="position:absolute;left:1324.45px;top:930.16px;font-size:18px;line-height:18px;color:#f2f2f2;transform:scaleX(0.9850);transform-origin:0 0;white-space:pre;">88,888</div>
<div style="position:absolute;left:1407.82px;top:930.16px;font-size:18px;line-height:18px;color:#f2f2f2;transform:scaleX(0.9850);transform-origin:0 0;white-space:pre;">131,173</div>
<div style="position:absolute;left:1492.17px;top:930.16px;font-size:18px;line-height:18px;color:#f2f2f2;transform:scaleX(0.9850);transform-origin:0 0;white-space:pre;">183,328</div>
<div style="position:absolute;left:1577.50px;top:930.16px;font-size:18px;line-height:18px;color:#f2f2f2;transform:scaleX(0.9850);transform-origin:0 0;white-space:pre;">248,648</div>
<div style="position:absolute;left:1661.85px;top:930.16px;font-size:18px;line-height:18px;color:#f2f2f2;transform:scaleX(0.9850);transform-origin:0 0;white-space:pre;">325,846</div>
<div style="position:absolute;left:1746.20px;top:930.16px;font-size:18px;line-height:18px;color:#f2f2f2;transform:scaleX(0.9850);transform-origin:0 0;white-space:pre;">411,787</div>
<div style="position:absolute;left:736.90px;top:961.09px;font-size:17.5px;line-height:17.5px;color:#f6f6f6;font-weight:bold;transform:scaleX(1.0672);transform-origin:0 0;white-space:pre;">Gamma Log/Log</div>
<div style="position:absolute;left:901.72px;top:959.86px;font-size:18px;line-height:18px;color:#f2f2f2;transform:scaleX(0.9850);transform-origin:0 0;white-space:pre;">1,278</div>
<div style="position:absolute;left:987.05px;top:959.86px;font-size:18px;line-height:18px;color:#f2f2f2;transform:scaleX(0.9850);transform-origin:0 0;white-space:pre;">2,175</div>
<div style="position:absolute;left:1071.40px;top:959.86px;font-size:18px;line-height:18px;color:#f2f2f2;transform:scaleX(0.9850);transform-origin:0 0;white-space:pre;">2,136</div>
<div style="position:absolute;left:1155.75px;top:959.86px;font-size:18px;line-height:18px;color:#f2f2f2;transform:scaleX(0.9850);transform-origin:0 0;white-space:pre;">2,089</div>
<div style="position:absolute;left:1240.10px;top:959.86px;font-size:18px;line-height:18px;color:#f2f2f2;transform:scaleX(0.9850);transform-origin:0 0;white-space:pre;">2,045</div>
<div style="position:absolute;left:1323.47px;top:959.86px;font-size:18px;line-height:18px;color:#f2f2f2;transform:scaleX(0.9850);transform-origin:0 0;white-space:pre;">1,983</div>
<div style="position:absolute;left:1407.82px;top:959.86px;font-size:18px;line-height:18px;color:#f2f2f2;transform:scaleX(0.9850);transform-origin:0 0;white-space:pre;">1,955</div>
<div style="position:absolute;left:1492.17px;top:959.86px;font-size:18px;line-height:18px;color:#f2f2f2;transform:scaleX(0.9850);transform-origin:0 0;white-space:pre;">1,940</div>
<div style="position:absolute;left:1576.52px;top:959.86px;font-size:18px;line-height:18px;color:#f2f2f2;transform:scaleX(0.9850);transform-origin:0 0;white-space:pre;">1,915</div>
<div style="position:absolute;left:1660.87px;top:959.86px;font-size:18px;line-height:18px;color:#f2f2f2;transform:scaleX(0.9850);transform-origin:0 0;white-space:pre;">1,915</div>
<div style="position:absolute;left:1746.20px;top:959.86px;font-size:18px;line-height:18px;color:#f2f2f2;transform:scaleX(0.9850);transform-origin:0 0;white-space:pre;">2,275</div>
<div style="position:absolute;left:736.90px;top:990.79px;font-size:17.5px;line-height:17.5px;color:#f6f6f6;font-weight:bold;transform:scaleX(0.9152);transform-origin:0 0;white-space:pre;">CCT</div>
<div style="position:absolute;left:902.70px;top:989.56px;font-size:18px;line-height:18px;color:#f2f2f2;transform:scaleX(0.9850);transform-origin:0 0;white-space:pre;">6858,000</div>
<div style="position:absolute;left:987.05px;top:989.56px;font-size:18px;line-height:18px;color:#f2f2f2;transform:scaleX(0.9850);transform-origin:0 0;white-space:pre;">5898,000</div>
<div style="position:absolute;left:1071.40px;top:989.56px;font-size:18px;line-height:18px;color:#f2f2f2;transform:scaleX(0.9850);transform-origin:0 0;white-space:pre;">6278,000</div>
<div style="position:absolute;left:1155.75px;top:989.56px;font-size:18px;line-height:18px;color:#f2f2f2;transform:scaleX(0.9850);transform-origin:0 0;white-space:pre;">6365,000</div>
<div style="position:absolute;left:1240.10px;top:989.56px;font-size:18px;line-height:18px;color:#f2f2f2;transform:scaleX(0.9850);transform-origin:0 0;white-space:pre;">6362,000</div>
<div style="position:absolute;left:1324.45px;top:989.56px;font-size:18px;line-height:18px;color:#f2f2f2;transform:scaleX(0.9850);transform-origin:0 0;white-space:pre;">6362,000</div>
<div style="position:absolute;left:1408.80px;top:989.56px;font-size:18px;line-height:18px;color:#f2f2f2;transform:scaleX(0.9850);transform-origin:0 0;white-space:pre;">6426,000</div>
<div style="position:absolute;left:1493.15px;top:989.56px;font-size:18px;line-height:18px;color:#f2f2f2;transform:scaleX(0.9850);transform-origin:0 0;white-space:pre;">6340,000</div>
<div style="position:absolute;left:1577.50px;top:989.56px;font-size:18px;line-height:18px;color:#f2f2f2;transform:scaleX(0.9850);transform-origin:0 0;white-space:pre;">6383,000</div>
<div style="position:absolute;left:1661.85px;top:989.56px;font-size:18px;line-height:18px;color:#f2f2f2;transform:scaleX(0.9850);transform-origin:0 0;white-space:pre;">6412,000</div>
<div style="position:absolute;left:1746.20px;top:989.56px;font-size:18px;line-height:18px;color:#f2f2f2;transform:scaleX(0.9850);transform-origin:0 0;white-space:pre;">6393,000</div>
<div style="position:absolute;left:736.90px;top:1020.49px;font-size:17.5px;line-height:17.5px;color:#f6f6f6;font-weight:bold;transform:scaleX(1.0408);transform-origin:0 0;white-space:pre;">ΔE 2000</div>
<div style="position:absolute;left:902.70px;top:1019.26px;font-size:18px;line-height:18px;color:#f2f2f2;transform:scaleX(0.9850);transform-origin:0 0;white-space:pre;">0,334</div>
<div style="position:absolute;left:987.05px;top:1019.26px;font-size:18px;line-height:18px;color:#f2f2f2;transform:scaleX(0.9850);transform-origin:0 0;white-space:pre;">2,202</div>
<div style="position:absolute;left:1071.40px;top:1019.26px;font-size:18px;line-height:18px;color:#f2f2f2;transform:scaleX(0.9850);transform-origin:0 0;white-space:pre;">0,792</div>
<div style="position:absolute;left:1154.77px;top:1019.26px;font-size:18px;line-height:18px;color:#f2f2f2;transform:scaleX(0.9850);transform-origin:0 0;white-space:pre;">1,452</div>
<div style="position:absolute;left:1240.10px;top:1019.26px;font-size:18px;line-height:18px;color:#f2f2f2;transform:scaleX(0.9850);transform-origin:0 0;white-space:pre;">2,861</div>
<div style="position:absolute;left:1324.45px;top:1019.26px;font-size:18px;line-height:18px;color:#f2f2f2;transform:scaleX(0.9850);transform-origin:0 0;white-space:pre;">3,837</div>
<div style="position:absolute;left:1408.80px;top:1019.26px;font-size:18px;line-height:18px;color:#f2f2f2;transform:scaleX(0.9850);transform-origin:0 0;white-space:pre;">3,309</div>
<div style="position:absolute;left:1493.15px;top:1019.26px;font-size:18px;line-height:18px;color:#f2f2f2;transform:scaleX(0.9850);transform-origin:0 0;white-space:pre;">3,304</div>
<div style="position:absolute;left:1577.50px;top:1019.26px;font-size:18px;line-height:18px;color:#f2f2f2;transform:scaleX(0.9850);transform-origin:0 0;white-space:pre;">2,494</div>
<div style="position:absolute;left:1660.87px;top:1019.26px;font-size:18px;line-height:18px;color:#f2f2f2;transform:scaleX(0.9850);transform-origin:0 0;white-space:pre;">1,831</div>
<div style="position:absolute;left:1745.22px;top:1019.26px;font-size:18px;line-height:18px;color:#f2f2f2;transform:scaleX(0.9850);transform-origin:0 0;white-space:pre;">1,653</div>
<div style="position:absolute;left:935.50px;top:811.21px;font-size:17px;line-height:17px;color:#ffffff;white-space:pre;-webkit-text-stroke:0.3px #fff;">0</div>
<div style="position:absolute;left:1014.57px;top:811.21px;font-size:17px;line-height:17px;color:#ffffff;white-space:pre;-webkit-text-stroke:0.3px #fff;">10</div>
<div style="position:absolute;left:1099.37px;top:811.21px;font-size:17px;line-height:17px;color:#ffffff;white-space:pre;-webkit-text-stroke:0.3px #fff;">20</div>
<div style="position:absolute;left:1183.67px;top:811.21px;font-size:17px;line-height:17px;color:#ffffff;white-space:pre;-webkit-text-stroke:0.3px #fff;">30</div>
<div style="position:absolute;left:1267.97px;top:811.21px;font-size:17px;line-height:17px;color:#ffffff;white-space:pre;-webkit-text-stroke:0.3px #fff;">40</div>
<div style="position:absolute;left:1352.27px;top:811.21px;font-size:17px;line-height:17px;color:#ffffff;white-space:pre;-webkit-text-stroke:0.3px #fff;">50</div>
<div style="position:absolute;left:1436.57px;top:811.21px;font-size:17px;line-height:17px;color:#ffffff;white-space:pre;-webkit-text-stroke:0.3px #fff;">60</div>
<div style="position:absolute;left:1520.87px;top:811.21px;font-size:17px;line-height:17px;color:#ffffff;white-space:pre;-webkit-text-stroke:0.3px #fff;">70</div>
<div style="position:absolute;left:1605.17px;top:811.21px;font-size:17px;line-height:17px;color:#ffffff;white-space:pre;-webkit-text-stroke:0.3px #fff;">80</div>
<div style="position:absolute;left:1689.47px;top:811.21px;font-size:17px;line-height:17px;color:#ffffff;white-space:pre;-webkit-text-stroke:0.3px #fff;">90</div>
<div style="position:absolute;left:1768.55px;top:811.21px;font-size:17px;line-height:17px;color:#ffffff;white-space:pre;-webkit-text-stroke:0.3px #fff;">100</div>
<div style="position:absolute;left:61.73px;top:1151.96px;font-size:9.5px;line-height:9.5px;color:#2e2e2e;font-weight:bold;transform:scaleX(0.9500);transform-origin:0 0;white-space:pre;">0</div>
<div style="position:absolute;left:186.42px;top:1151.96px;font-size:9.5px;line-height:9.5px;color:#2e2e2e;font-weight:bold;transform:scaleX(0.9500);transform-origin:0 0;white-space:pre;">10</div>
<div style="position:absolute;left:313.62px;top:1151.96px;font-size:9.5px;line-height:9.5px;color:#2e2e2e;font-weight:bold;transform:scaleX(0.9500);transform-origin:0 0;white-space:pre;">20</div>
<div style="position:absolute;left:440.82px;top:1151.96px;font-size:9.5px;line-height:9.5px;color:#2e2e2e;font-weight:bold;transform:scaleX(0.9500);transform-origin:0 0;white-space:pre;">30</div>
<div style="position:absolute;left:568.02px;top:1151.96px;font-size:9.5px;line-height:9.5px;color:#2e2e2e;font-weight:bold;transform:scaleX(0.9500);transform-origin:0 0;white-space:pre;">40</div>
<div style="position:absolute;left:695.22px;top:1151.96px;font-size:9.5px;line-height:9.5px;color:#2e2e2e;font-weight:bold;transform:scaleX(0.9500);transform-origin:0 0;white-space:pre;">50</div>
<div style="position:absolute;left:822.42px;top:1151.96px;font-size:9.5px;line-height:9.5px;color:#2e2e2e;font-weight:bold;transform:scaleX(0.9500);transform-origin:0 0;white-space:pre;">60</div>
<div style="position:absolute;left:949.62px;top:1151.96px;font-size:9.5px;line-height:9.5px;color:#2e2e2e;font-weight:bold;transform:scaleX(0.9500);transform-origin:0 0;white-space:pre;">70</div>
<div style="position:absolute;left:1076.82px;top:1151.96px;font-size:9.5px;line-height:9.5px;color:#2e2e2e;font-weight:bold;transform:scaleX(0.9500);transform-origin:0 0;white-space:pre;">80</div>
<div style="position:absolute;left:1204.02px;top:1151.96px;font-size:9.5px;line-height:9.5px;color:#2e2e2e;font-weight:bold;transform:scaleX(0.9500);transform-origin:0 0;white-space:pre;">90</div>
<div style="position:absolute;left:1327.84px;top:1150.94px;font-size:10px;line-height:10px;color:#fff;font-weight:bold;white-space:pre;">100</div>
<div style="position:absolute;left:1711.30px;top:1142.61px;font-size:17px;line-height:17px;color:#222;white-space:pre;-webkit-text-stroke:0.3px #222;">«</div>
<div style="position:absolute;left:1889.30px;top:1142.61px;font-size:17px;line-height:17px;color:#222;white-space:pre;-webkit-text-stroke:0.3px #222;">»</div>
<div style="position:absolute;left:1736.99px;top:1142.12px;font-size:19px;line-height:19px;color:#222;transform:scaleX(1.0062);transform-origin:0 0;white-space:pre;-webkit-text-stroke:0.35px #222;">Back</div>
<div style="position:absolute;left:1826.29px;top:1142.12px;font-size:19px;line-height:19px;color:#222;transform:scaleX(1.1086);transform-origin:0 0;white-space:pre;-webkit-text-stroke:0.35px #222;">Next</div>
</body></html>
